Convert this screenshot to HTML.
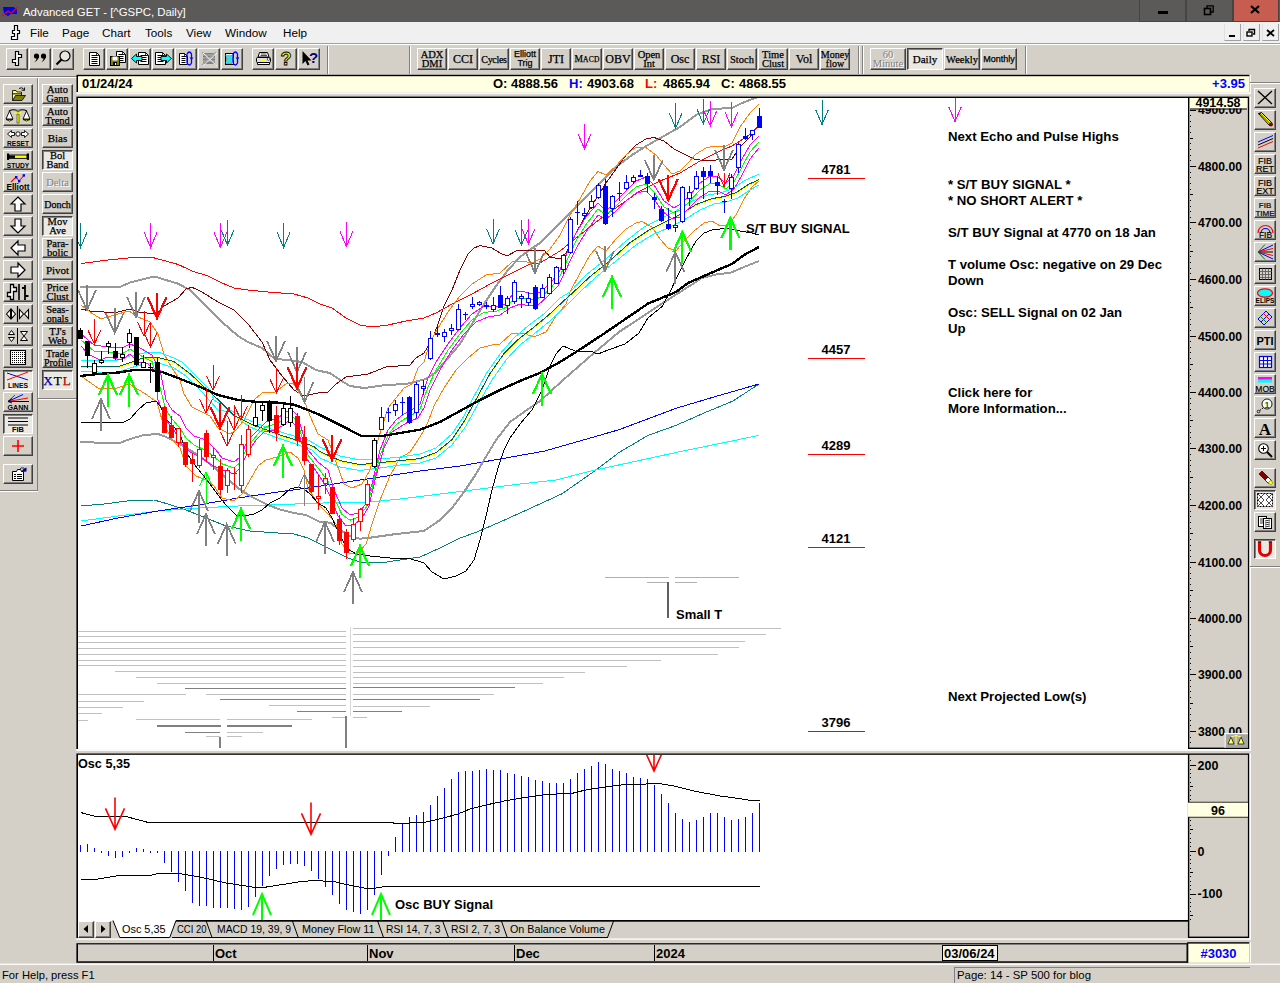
<!DOCTYPE html><html><head><meta charset="utf-8"><title>Advanced GET</title><style>
*{box-sizing:border-box;margin:0;padding:0}
html,body{width:1280px;height:983px;overflow:hidden;background:#d4d0c8;font-family:"Liberation Sans",sans-serif;}
.a{position:absolute}
.btn{position:absolute;background:#d4d0c8;border-top:1px solid #fff;border-left:1px solid #fff;border-right:1px solid #404040;border-bottom:1px solid #404040;box-shadow:inset -1px -1px 0 #808080;overflow:hidden}
.btn.dn{border-top:1px solid #404040;border-left:1px solid #404040;border-right:1px solid #fff;border-bottom:1px solid #fff;box-shadow:inset 1px 1px 0 #808080;background:#ebe9e4}
.st{font-family:"Liberation Serif",serif;font-size:10.5px;line-height:9px;text-align:center;color:#000;white-space:nowrap;display:flex;align-items:center;justify-content:center;-webkit-text-stroke:0.25px #000}
.lbl{position:absolute;font-weight:bold;font-size:13px;color:#000;white-space:nowrap;line-height:16px}
.menu{position:absolute;top:25px;font-size:11.7px;line-height:16px;color:#000}
svg{position:absolute;overflow:visible}
</style></head><body><div class="a" style="left:0;top:0;width:1280px;height:22px;background:#5c5a58"></div>
<svg style="left:2px;top:6px" width="18" height="11" viewBox="0 0 18 11"><path d="M1 1 L12 1 L15 4 L15 8 L9 8 L6 10 L2 8 Z" fill="#0000e0"/><path d="M0 10 L6 5 L9 7 L16 1" stroke="#f00" stroke-width="1.2" fill="none"/></svg>
<div class="a" style="left:23px;top:4px;font-size:11.4px;line-height:16px;color:#fff;white-space:nowrap">Advanced GET - [^GSPC, Daily]</div>
<div class="a" style="left:1139px;top:0;width:47px;height:22px;background:#5c5a58;border:1px solid #464444;border-top:none"></div>
<div class="a" style="left:1186px;top:0;width:47px;height:22px;background:#5c5a58;border:1px solid #464444;border-top:none"></div>
<div class="a" style="left:1233px;top:0;width:46px;height:22px;background:#c75c50;border:1px solid #464444;border-top:none"></div>
<div class="a" style="left:1158px;top:11px;width:10px;height:3px;background:#000"></div>
<svg style="left:1203px;top:4px" width="12" height="12"><rect x="1.5" y="4.5" width="6" height="6" fill="none" stroke="#000" stroke-width="1.6"/><path d="M4 4 V1.8 H10.2 V8 H8" fill="none" stroke="#000" stroke-width="1.3"/></svg>
<svg style="left:1250px;top:5px" width="10" height="10"><path d="M1 1 L9 8 M9 1 L1 8" stroke="#000" stroke-width="2.2" fill="none"/></svg>
<div class="a" style="left:0;top:22px;width:1280px;height:21px;background:#f0f0f0"></div>
<div class="a" style="left:0;top:43px;width:1280px;height:1px;background:#a0a0a0"></div>
<svg style="left:9px;top:24px" width="12" height="18"><path d="M5.5 1.5 H8.5 V6.5 H10.5 V9.5 H8.5 V15.5 H2.5 V12.5 H5.5 V9.5 H3.5 V6.5 H5.5 Z" fill="#fff" stroke="#000" stroke-width="1.2"/></svg>
<div class="menu" style="left:30px">File</div>
<div class="menu" style="left:62px">Page</div>
<div class="menu" style="left:102px">Chart</div>
<div class="menu" style="left:145px">Tools</div>
<div class="menu" style="left:186px">View</div>
<div class="menu" style="left:225px">Window</div>
<div class="menu" style="left:283px">Help</div>
<div class="a" style="left:1224px;top:24px;width:17px;height:17px;background:#f0f0f0;border-right:1px solid #a0a0a0;border-bottom:1px solid #a0a0a0;border-left:1px solid #e0e0e0"></div>
<div class="a" style="left:1243px;top:24px;width:17px;height:17px;background:#f0f0f0;border-right:1px solid #a0a0a0;border-bottom:1px solid #a0a0a0;border-left:1px solid #e0e0e0"></div>
<div class="a" style="left:1262px;top:24px;width:17px;height:17px;background:#f0f0f0;border-right:1px solid #a0a0a0;border-bottom:1px solid #a0a0a0;border-left:1px solid #e0e0e0"></div>
<div class="a" style="left:1229px;top:35px;width:6px;height:2px;background:#000"></div>
<svg style="left:1246px;top:28px" width="10" height="10"><rect x="1" y="4" width="5" height="4" fill="none" stroke="#000" stroke-width="1.4"/><path d="M3 3 V1.5 H8.5 V6 H7" fill="none" stroke="#000" stroke-width="1.4"/></svg>
<svg style="left:1266px;top:29px" width="9" height="8"><path d="M1 1 L8 7 M8 1 L1 7" stroke="#000" stroke-width="1.8" fill="none"/></svg>
<div class="a" style="left:0;top:44px;width:1280px;height:1px;background:#fff"></div>
<div class="btn " style="left:6px;top:48px;width:22px;height:22px"><svg style="left:0;top:0" width="20" height="19" viewBox="0 0 20 19" ><path d="M8.5 2.5 H11.5 V5.5 H14.5 V8.5 H11.5 V16.5 H8.5 V13.5 H5.5 V10.5 H8.5 Z" fill="#fff" stroke="#000" stroke-width="1.2"/></svg></div>
<div class="btn " style="left:29px;top:48px;width:22px;height:22px"><svg style="left:0;top:0" width="20" height="19" viewBox="0 0 20 19" ><circle cx="6.5" cy="7" r="2.6" fill="#000"/><path d="M8.9 6 Q9.5 11 4.0 13.5 Q7.5 10.5 6.0 8 Z" fill="#000"/><circle cx="13.5" cy="7" r="2.6" fill="#000"/><path d="M15.9 6 Q16.5 11 11.0 13.5 Q14.5 10.5 13.0 8 Z" fill="#000"/></svg></div>
<div class="btn " style="left:52px;top:48px;width:22px;height:22px"><svg style="left:0;top:0" width="20" height="19" viewBox="0 0 20 19" ><circle cx="12" cy="7" r="5" fill="#e8e6e0" stroke="#000" stroke-width="1.2"/><path d="M8.5 10.5 L3.5 15.5" stroke="#000" stroke-width="2.2"/></svg></div>
<div class="btn " style="left:83px;top:48px;width:22px;height:22px"><svg style="left:0;top:0" width="20" height="19" viewBox="0 0 20 19" ><path d="M5.5 3.5 H12.5 L15.5 6.5 V16.5 H5.5 Z" fill="#fff" stroke="#000" stroke-width="1"/><path d="M12.5 3.5 V6.5 H15.5" fill="none" stroke="#000" stroke-width="0.8"/><path d="M7.5 6.5 H13.5" stroke="#000" stroke-width="1"/><path d="M7.5 8.5 H13.5" stroke="#000" stroke-width="1"/><path d="M7.5 10.5 H13.5" stroke="#000" stroke-width="1"/><path d="M7.5 12.5 H13.5" stroke="#000" stroke-width="1"/><path d="M7.5 14.5 H13.5" stroke="#000" stroke-width="1"/></svg></div>
<div class="btn " style="left:106px;top:48px;width:22px;height:22px"><svg style="left:0;top:0" width="20" height="19" viewBox="0 0 20 19" ><path d="M9.5 2.5 H15.5 L18.5 5.5 V13.5 H9.5 Z" fill="#fff" stroke="#000" stroke-width="1"/><path d="M15.5 2.5 V5.5 H18.5" fill="none" stroke="#000" stroke-width="0.8"/><path d="M11.5 5.5 H16.5" stroke="#000" stroke-width="1"/><path d="M11.5 7.5 H16.5" stroke="#000" stroke-width="1"/><path d="M11.5 9.5 H16.5" stroke="#000" stroke-width="1"/><path d="M11.5 11.5 H16.5" stroke="#000" stroke-width="1"/><rect x="3.5" y="7.5" width="9" height="9" fill="#808000" stroke="#000"/><rect x="5.5" y="7.5" width="5" height="4" fill="#fff"/><rect x="6" y="13" width="4" height="3.5" fill="#000"/><rect x="8" y="14" width="1.2" height="2" fill="#fff"/></svg></div>
<div class="btn " style="left:129px;top:48px;width:22px;height:22px"><svg style="left:0;top:0" width="20" height="19" viewBox="0 0 20 19" ><path d="M8.5 3.5 H15.5 L18.5 6.5 V15.5 H8.5 Z" fill="#fff" stroke="#000" stroke-width="1"/><path d="M15.5 3.5 V6.5 H18.5" fill="none" stroke="#000" stroke-width="0.8"/><path d="M10.5 6.5 H16.5" stroke="#000" stroke-width="1"/><path d="M10.5 8.5 H16.5" stroke="#000" stroke-width="1"/><path d="M10.5 10.5 H16.5" stroke="#000" stroke-width="1"/><path d="M10.5 12.5 H16.5" stroke="#000" stroke-width="1"/><path d="M1.5 9.5 L6.5 5 V7.5 H12 V11.5 H6.5 V14 Z" fill="#0ff" stroke="#000" stroke-width="0.9"/></svg></div>
<div class="btn " style="left:152px;top:48px;width:22px;height:22px"><svg style="left:0;top:0" width="20" height="19" viewBox="0 0 20 19" ><path d="M2.5 3.5 H9.5 L12.5 6.5 V15.5 H2.5 Z" fill="#fff" stroke="#000" stroke-width="1"/><path d="M9.5 3.5 V6.5 H12.5" fill="none" stroke="#000" stroke-width="0.8"/><path d="M4.5 6.5 H10.5" stroke="#000" stroke-width="1"/><path d="M4.5 8.5 H10.5" stroke="#000" stroke-width="1"/><path d="M4.5 10.5 H10.5" stroke="#000" stroke-width="1"/><path d="M4.5 12.5 H10.5" stroke="#000" stroke-width="1"/><path d="M18.5 9.5 L13.5 5 V7.5 H8 V11.5 H13.5 V14 Z" fill="#0ff" stroke="#000" stroke-width="0.9"/></svg></div>
<div class="btn " style="left:175px;top:48px;width:22px;height:22px"><svg style="left:0;top:0" width="20" height="19" viewBox="0 0 20 19" ><path d="M3.5 4.5 H8.5 L11.5 7.5 V15.5 H3.5 Z" fill="#fff" stroke="#000" stroke-width="1"/><path d="M8.5 4.5 V7.5 H11.5" fill="none" stroke="#000" stroke-width="0.8"/><path d="M5.5 7.5 H9.5" stroke="#000" stroke-width="1"/><path d="M5.5 9.5 H9.5" stroke="#000" stroke-width="1"/><path d="M5.5 11.5 H9.5" stroke="#000" stroke-width="1"/><path d="M5.5 13.5 H9.5" stroke="#000" stroke-width="1"/><path d="M11 5 Q13.5 1 15.5 5 V9 M11 14 Q13.5 18 15.5 14 V10 M11 5 V14" fill="none" stroke="#00f" stroke-width="1.3"/><path d="M13.5 8.5 H17.5 L15.5 11 Z" fill="#00f"/></svg></div>
<div class="btn " style="left:198px;top:48px;width:22px;height:22px"><svg style="left:0;top:0" width="20" height="19" viewBox="0 0 20 19" ><rect x="4" y="4" width="12" height="11" fill="#808080"/><path d="M3 3 L17 16 M17 3 L3 16 M4 6 H16 M4 9 H16 M4 12 H16" stroke="#a8a8a8" stroke-width="1.3"/><path d="M4 4 L18 17 M18 4 L4 17" stroke="#fff" stroke-width="0.8"/></svg></div>
<div class="btn " style="left:221px;top:48px;width:22px;height:22px"><svg style="left:0;top:0" width="20" height="19" viewBox="0 0 20 19" ><rect x="3.5" y="4.5" width="8" height="11" fill="#fff" stroke="#000"/><path d="M5 6 V15 M7 6 V15 M9 6 V15" stroke="#000" stroke-width="0.8"/><path d="M4 6 L8 10 L4 14 M7 6 L11 10 L7 14" fill="none" stroke="#0ff" stroke-width="1.6"/><path d="M11 5 Q13.5 1 15.5 5 V9 M11 14 Q13.5 18 15.5 14 V10 M11 5 V14" fill="none" stroke="#00f" stroke-width="1.3"/><path d="M13.5 8.5 H17.5 L15.5 11 Z" fill="#00f"/></svg></div>
<div class="btn " style="left:252px;top:48px;width:22px;height:22px"><svg style="left:0;top:0" width="20" height="19" viewBox="0 0 20 19" ><path d="M6.5 3.5 H14.5 L16 8 H5 Z" fill="#fff" stroke="#000"/><path d="M8 5 H13.5 M7.5 6.5 H14" stroke="#000" stroke-width="0.7"/><rect x="3.5" y="8.5" width="14" height="5" rx="1" fill="#e0e0e0" stroke="#000"/><path d="M4.5 13.5 H16.5 V15.5 H4.5 Z" fill="#fff" stroke="#000"/><rect x="9" y="11" width="3" height="1" fill="#ff0"/><circle cx="15.5" cy="10" r="1.3" fill="#fff" stroke="#000" stroke-width="0.6"/></svg></div>
<div class="btn " style="left:275px;top:48px;width:22px;height:22px"><svg style="left:0;top:0" width="20" height="19" viewBox="0 0 20 19" ><text x="10" y="16" font-family="Liberation Sans, sans-serif" font-weight="bold" font-size="18" text-anchor="middle" fill="#ff0" stroke="#000" stroke-width="0.9">?</text></svg></div>
<div class="btn " style="left:298px;top:48px;width:22px;height:22px"><svg style="left:0;top:0" width="20" height="19" viewBox="0 0 20 19" ><path d="M3.5 2 V15 L6.5 12 L8.5 16.5 L10.5 15.5 L8.5 11.5 H12.5 Z" fill="#000"/><text x="14.5" y="14" font-family="Liberation Sans, sans-serif" font-weight="bold" font-size="15" text-anchor="middle" fill="#000080">?</text></svg></div>
<div class="a" style="left:327px;top:46px;width:1px;height:28px;background:#808080"></div>
<div class="a" style="left:328px;top:46px;width:1px;height:28px;background:#fff"></div>
<div class="a" style="left:409px;top:46px;width:1px;height:28px;background:#808080"></div>
<div class="a" style="left:410px;top:46px;width:1px;height:28px;background:#fff"></div>
<div class="btn st " style="left:417px;top:48px;width:30px;height:22px;">ADX<br>DMI</div>
<div class="btn st " style="left:448px;top:48px;width:30px;height:22px;font-size:12px;">CCI</div>
<div class="btn st " style="left:479px;top:48px;width:30px;height:22px;font-size:10px;letter-spacing:-0.3px;">Cycles</div>
<div class="btn st " style="left:510px;top:48px;width:30px;height:22px;font-family:'Liberation Sans',sans-serif;font-size:9px;line-height:9px;">Elliott<br>Trig</div>
<div class="btn st " style="left:541px;top:48px;width:30px;height:22px;font-size:12px;">JTI</div>
<div class="btn st " style="left:572px;top:48px;width:30px;height:22px;font-size:9.5px;letter-spacing:0.2px;">M<span style="font-size:7.5px">ACD</span></div>
<div class="btn st " style="left:603px;top:48px;width:30px;height:22px;font-size:12px;">OBV</div>
<div class="btn st " style="left:634px;top:48px;width:30px;height:22px;">Open<br>Int</div>
<div class="btn st " style="left:665px;top:48px;width:30px;height:22px;font-size:12px;">Osc</div>
<div class="btn st " style="left:696px;top:48px;width:30px;height:22px;font-size:12px;">RSI</div>
<div class="btn st " style="left:727px;top:48px;width:30px;height:22px;">Stoch</div>
<div class="btn st " style="left:758px;top:48px;width:30px;height:22px;">Time<br>Clust</div>
<div class="btn st " style="left:789px;top:48px;width:30px;height:22px;font-size:12px;">Vol</div>
<div class="btn st " style="left:820px;top:48px;width:30px;height:22px;font-size:10px;">Money<br>flow</div>
<div class="a" style="left:858px;top:46px;width:1px;height:28px;background:#808080"></div>
<div class="a" style="left:859px;top:46px;width:1px;height:28px;background:#fff"></div>
<div class="a" style="left:862px;top:46px;width:1px;height:28px;background:#808080"></div>
<div class="a" style="left:863px;top:46px;width:1px;height:28px;background:#fff"></div>
<div class="btn st " style="left:870px;top:48px;width:36px;height:22px;color:#808080;text-shadow:1px 1px 0 #fff;-webkit-text-stroke:0;">60<br>Minute</div>
<div class="btn st dn" style="left:907px;top:48px;width:36px;height:22px;font-size:11px;">Daily</div>
<div class="btn st " style="left:944px;top:48px;width:36px;height:22px;font-size:10.5px;">Weekly</div>
<div class="btn st " style="left:981px;top:48px;width:36px;height:22px;font-family:'Liberation Sans',sans-serif;font-size:9px;">Monthly</div>
<div class="a" style="left:1025px;top:46px;width:1px;height:28px;background:#808080"></div>
<div class="a" style="left:1026px;top:46px;width:1px;height:28px;background:#fff"></div>
<div class="a" style="left:0;top:76px;width:77px;height:1px;background:#808080"></div>
<div class="a" style="left:0;top:77px;width:77px;height:1px;background:#fff"></div>
<div class="a" style="left:37px;top:78px;width:1px;height:413px;background:#808080"></div>
<div class="a" style="left:38px;top:78px;width:1px;height:321px;background:#fff"></div>
<div class="a" style="left:0px;top:490px;width:38px;height:1px;background:#808080"></div>
<div class="a" style="left:0px;top:491px;width:38px;height:1px;background:#fff"></div>
<div class="a" style="left:38px;top:398px;width:39px;height:1px;background:#808080"></div>
<div class="a" style="left:38px;top:399px;width:39px;height:1px;background:#fff"></div>
<div class="btn " style="left:3px;top:84px;width:30px;height:20px"><svg style="left:0;top:0" width="28" height="18" viewBox="0 0 28 18" ><path d="M8.5 5.5 H12 L13 7 H17.5 V9 H8.5 Z" fill="#ff6" stroke="#000" stroke-width="0.8"/><path d="M8.5 15.5 V9 H17.5 V11" fill="#ffffa0" stroke="#000" stroke-width="0.8"/><path d="M8.5 15.5 L11.5 10.5 H21.5 L18 15.5 Z" fill="#808000" stroke="#000" stroke-width="0.8"/><path d="M15 3.5 Q18 1.5 20 4.5 M20.5 5.5 L20.5 2.5 M20.5 5.5 L17.5 5" fill="none" stroke="#000" stroke-width="0.9"/></svg></div>
<div class="btn " style="left:3px;top:106px;width:30px;height:20px"><svg style="left:0;top:0" width="28" height="18" viewBox="0 0 28 18" ><path d="M14 3 V16 M5 4 Q9.5 1.5 14 4 Q18.5 1.5 23 4" fill="none" stroke="#000" stroke-width="1.1"/><rect x="13" y="7" width="2" height="9" fill="#ff0" stroke="#000" stroke-width="0.5"/><path d="M5.5 4 L2 12 H9 Z M22.5 4 L19 12 H26 Z" fill="#fff" stroke="#000" stroke-width="0.9"/><path d="M2 12.5 Q5.5 15.5 9 12.5 Z M19 12.5 Q22.5 15.5 26 12.5 Z" fill="#ff0" stroke="#000" stroke-width="0.8"/><path d="M11.5 4.5 L14 2 L16.5 4.5 Z" fill="#808080"/><path d="M10.5 6 H17.5" stroke="#ff0" stroke-width="1.5"/></svg></div>
<div class="btn " style="left:3px;top:128px;width:30px;height:20px"><svg style="left:0;top:0" width="28" height="18" viewBox="0 0 28 18" ><path d="M3.5 5 L7.5 1.5 V3.5 H10.5 V6.5 H7.5 V8.5 Z M24.5 5 L20.5 1.5 V3.5 H17.5 V6.5 H20.5 V8.5 Z" fill="#fff" stroke="#000" stroke-width="0.9"/><circle cx="14" cy="5" r="2.2" fill="#fff" stroke="#000" stroke-width="0.9"/><text x="14" y="16.5" font-family="Liberation Sans, sans-serif" font-weight="bold" font-size="7.5" text-anchor="middle" fill="#000" letter-spacing="0" textLength="22" lengthAdjust="spacingAndGlyphs">RESET</text></svg></div>
<div class="btn " style="left:3px;top:150px;width:30px;height:20px"><svg style="left:0;top:0" width="28" height="18" viewBox="0 0 28 18" ><rect x="5" y="4" width="18" height="3.4" fill="#ff0" stroke="#000" stroke-width="0.9"/><rect x="3" y="2.5" width="2.2" height="6.4" fill="#000"/><rect x="22.8" y="2.5" width="2.2" height="6.4" fill="#000"/><rect x="5" y="4.5" width="6" height="2.4" fill="#000"/><text x="14" y="16.5" font-family="Liberation Sans, sans-serif" font-weight="bold" font-size="7.5" text-anchor="middle" fill="#000" letter-spacing="0" textLength="22.5" lengthAdjust="spacingAndGlyphs">STUDY</text></svg></div>
<div class="btn " style="left:3px;top:172px;width:30px;height:20px"><svg style="left:0;top:0" width="28" height="18" viewBox="0 0 28 18" ><path d="M7 9 L12 4 L15 8 L20 2.5" fill="none" stroke="#f00" stroke-width="1.1"/><rect x="11" y="3" width="2.4" height="2.4" fill="#00f"/><rect x="14" y="7" width="2.4" height="2.4" fill="#00f"/><rect x="18.6" y="1.2" width="2.4" height="2.4" fill="#00f"/><text x="14" y="16.5" font-family="Liberation Sans, sans-serif" font-weight="bold" font-size="8.5" text-anchor="middle" fill="#000" letter-spacing="0" textLength="23" lengthAdjust="spacingAndGlyphs">Elliott</text></svg></div>
<div class="btn " style="left:3px;top:194px;width:30px;height:20px"><svg style="left:0;top:0" width="28" height="18" viewBox="0 0 28 18" ><g transform="rotate(0 14 9)"><path d="M14 2 L21 9 H17 V16 H11 V9 H7 Z" fill="#fff" stroke="#000" stroke-width="1.2"/></g></svg></div>
<div class="btn " style="left:3px;top:216px;width:30px;height:20px"><svg style="left:0;top:0" width="28" height="18" viewBox="0 0 28 18" ><g transform="rotate(180 14 9)"><path d="M14 2 L21 9 H17 V16 H11 V9 H7 Z" fill="#fff" stroke="#000" stroke-width="1.2"/></g></svg></div>
<div class="btn " style="left:3px;top:238px;width:30px;height:20px"><svg style="left:0;top:0" width="28" height="18" viewBox="0 0 28 18" ><g transform="rotate(270 14 9)"><path d="M14 2 L21 9 H17 V16 H11 V9 H7 Z" fill="#fff" stroke="#000" stroke-width="1.2"/></g></svg></div>
<div class="btn " style="left:3px;top:260px;width:30px;height:20px"><svg style="left:0;top:0" width="28" height="18" viewBox="0 0 28 18" ><g transform="rotate(90 14 9)"><path d="M14 2 L21 9 H17 V16 H11 V9 H7 Z" fill="#fff" stroke="#000" stroke-width="1.2"/></g></svg></div>
<div class="btn " style="left:3px;top:282px;width:30px;height:20px"><svg style="left:0;top:0" width="28" height="18" viewBox="0 0 28 18" ><path d="M6.5 1.5 H9.5 V4.5 H12.5 V8.5 H9.5 V16.5 H6.5 V13.5 H3.5 V9.5 H6.5 Z" fill="#fff" stroke="#000" stroke-width="1.3"/><path d="M15 1 V17" stroke="#000" stroke-width="1.6"/><path d="M21 2 V17 M18 5 H21 M21 13 H24.5" stroke="#000" stroke-width="1.8" fill="none"/></svg></div>
<div class="btn " style="left:3px;top:304px;width:30px;height:20px"><svg style="left:0;top:0" width="28" height="18" viewBox="0 0 28 18" ><path d="M13.5 1 V17" stroke="#000" stroke-width="1.2"/><path d="M2.5 9 L6.5 4.5 V13.5 Z M11.5 9 L7.5 4.5 V13.5 Z M15.5 4.5 L19.5 9 L15.5 13.5 Z M24.5 4.5 L20.5 9 L24.5 13.5 Z" fill="#fff" stroke="#000" stroke-width="1.1"/></svg></div>
<div class="btn " style="left:3px;top:326px;width:30px;height:20px"><svg style="left:0;top:0" width="28" height="18" viewBox="0 0 28 18" ><path d="M13.5 1 V17" stroke="#000" stroke-width="1"/><path d="M4.5 7.5 L7.5 3.5 L10.5 7.5 Z M4.5 10.5 L7.5 14.5 L10.5 10.5 Z" fill="#fff" stroke="#000" stroke-width="1"/><path d="M16.5 4.5 H23.5 L16.5 13.5 H23.5 Z" fill="#fff" stroke="#000" stroke-width="1"/></svg></div>
<div class="btn " style="left:3px;top:348px;width:30px;height:20px"><svg style="left:0;top:0" width="28" height="18" viewBox="0 0 28 18" ><rect x="6.5" y="1.5" width="15" height="14" fill="#fff" stroke="#000" stroke-width="1.1"/><rect x="8" y="3" width="1" height="1" fill="#000"/><rect x="8" y="5" width="1" height="1" fill="#000"/><rect x="8" y="7" width="1" height="1" fill="#000"/><rect x="8" y="9" width="1" height="1" fill="#000"/><rect x="8" y="11" width="1" height="1" fill="#000"/><rect x="8" y="13" width="1" height="1" fill="#000"/><rect x="10" y="3" width="1" height="1" fill="#000"/><rect x="10" y="5" width="1" height="1" fill="#000"/><rect x="10" y="7" width="1" height="1" fill="#000"/><rect x="10" y="9" width="1" height="1" fill="#000"/><rect x="10" y="11" width="1" height="1" fill="#000"/><rect x="10" y="13" width="1" height="1" fill="#000"/><rect x="12" y="3" width="1" height="1" fill="#000"/><rect x="12" y="5" width="1" height="1" fill="#000"/><rect x="12" y="7" width="1" height="1" fill="#000"/><rect x="12" y="9" width="1" height="1" fill="#000"/><rect x="12" y="11" width="1" height="1" fill="#000"/><rect x="12" y="13" width="1" height="1" fill="#000"/><rect x="14" y="3" width="1" height="1" fill="#000"/><rect x="14" y="5" width="1" height="1" fill="#000"/><rect x="14" y="7" width="1" height="1" fill="#000"/><rect x="14" y="9" width="1" height="1" fill="#000"/><rect x="14" y="11" width="1" height="1" fill="#000"/><rect x="14" y="13" width="1" height="1" fill="#000"/><rect x="16" y="3" width="1" height="1" fill="#000"/><rect x="16" y="5" width="1" height="1" fill="#000"/><rect x="16" y="7" width="1" height="1" fill="#000"/><rect x="16" y="9" width="1" height="1" fill="#000"/><rect x="16" y="11" width="1" height="1" fill="#000"/><rect x="16" y="13" width="1" height="1" fill="#000"/><rect x="18" y="3" width="1" height="1" fill="#000"/><rect x="18" y="5" width="1" height="1" fill="#000"/><rect x="18" y="7" width="1" height="1" fill="#000"/><rect x="18" y="9" width="1" height="1" fill="#000"/><rect x="18" y="11" width="1" height="1" fill="#000"/><rect x="18" y="13" width="1" height="1" fill="#000"/><rect x="20" y="3" width="1" height="1" fill="#000"/><rect x="20" y="5" width="1" height="1" fill="#000"/><rect x="20" y="7" width="1" height="1" fill="#000"/><rect x="20" y="9" width="1" height="1" fill="#000"/><rect x="20" y="11" width="1" height="1" fill="#000"/><rect x="20" y="13" width="1" height="1" fill="#000"/></svg></div>
<div class="btn dn" style="left:3px;top:370px;width:30px;height:20px"><svg style="left:0;top:0" width="28" height="18" viewBox="0 0 28 18" ><path d="M3 2 L24 9" stroke="#00f" stroke-width="1"/><path d="M3 9 L24 1" stroke="#f00" stroke-width="1"/><text x="14" y="16.5" font-family="Liberation Sans, sans-serif" font-weight="bold" font-size="7" text-anchor="middle" fill="#000" letter-spacing="0" textLength="20" lengthAdjust="spacingAndGlyphs">LINES</text></svg></div>
<div class="btn " style="left:3px;top:392px;width:30px;height:20px"><svg style="left:0;top:0" width="28" height="18" viewBox="0 0 28 18" ><path d="M4 8.5 H25" stroke="#000"/><path d="M4 8.5 L24 5" stroke="#f00"/><path d="M4 8.5 L19 1.5" stroke="#00f"/><path d="M4 8.5 L11 2" stroke="#008000"/><path d="M4 8.5 L8 5.5 M4 8.5 L8 10" stroke="#000" stroke-width="0.9"/><text x="14" y="17" font-family="Liberation Sans, sans-serif" font-weight="bold" font-size="7.5" text-anchor="middle" fill="#000" letter-spacing="0" textLength="21" lengthAdjust="spacingAndGlyphs">GANN</text></svg></div>
<div class="btn dn" style="left:3px;top:414px;width:30px;height:20px"><svg style="left:0;top:0" width="28" height="18" viewBox="0 0 28 18" ><path d="M4 3 H24 M4 6.5 H24 M4 10 H24" stroke="#000" stroke-width="1"/><text x="14" y="17" font-family="Liberation Sans, sans-serif" font-weight="bold" font-size="7.5" text-anchor="middle" fill="#000" letter-spacing="0" textLength="12" lengthAdjust="spacingAndGlyphs">FIB</text></svg></div>
<div class="btn " style="left:3px;top:436px;width:30px;height:20px"><svg style="left:0;top:0" width="28" height="18" viewBox="0 0 28 18" ><path d="M14 3 V15 M8 9 H20" stroke="#f00" stroke-width="1.6"/></svg></div>
<div class="btn " style="left:3px;top:464px;width:30px;height:20px"><svg style="left:0;top:0" width="28" height="18" viewBox="0 0 28 18" ><path d="M8.5 6.5 H12.5 L13.5 4.5 H16.5 L17.5 6.5 H19.5 V15.5 H8.5 Z" fill="#fff" stroke="#000" stroke-width="1"/><path d="M10 9.5 H12 M13 9.5 H18 M10 11.5 H12 M13 11.5 H18 M10 13.5 H12 M13 13.5 H18" stroke="#000" stroke-width="1"/><path d="M17 7 L20 3.5 L22.5 2.5 V6.5 Z" fill="#000080"/><path d="M15 5 Q17 2 20 3" fill="none" stroke="#000" stroke-width="0.8"/></svg></div>
<div class="btn st " style="left:42px;top:84px;width:31px;height:20px;">Auto<br>Gann</div>
<div class="btn st " style="left:42px;top:106px;width:31px;height:20px;">Auto<br>Trend</div>
<div class="btn st " style="left:42px;top:128px;width:31px;height:20px;font-size:11px;">Bias</div>
<div class="btn st dn" style="left:42px;top:150px;width:31px;height:20px;">Bol<br>Band</div>
<div class="btn st " style="left:42px;top:172px;width:31px;height:20px;font-size:10.5px;color:#808080;text-shadow:1px 1px 0 #fff;-webkit-text-stroke:0;">Delta</div>
<div class="btn st " style="left:42px;top:194px;width:31px;height:20px;font-size:10px;">Donch</div>
<div class="btn st dn" style="left:42px;top:216px;width:31px;height:20px;">Mov<br>Ave</div>
<div class="btn st " style="left:42px;top:238px;width:31px;height:20px;">Para-<br>bolic</div>
<div class="btn st " style="left:42px;top:260px;width:31px;height:20px;font-size:11px;">Pivot</div>
<div class="btn st " style="left:42px;top:282px;width:31px;height:20px;">Price<br>Clust</div>
<div class="btn st " style="left:42px;top:304px;width:31px;height:20px;">Seas-<br>onals</div>
<div class="btn st " style="left:42px;top:326px;width:31px;height:20px;">TJ's<br>Web</div>
<div class="btn st " style="left:42px;top:348px;width:31px;height:20px;font-size:10px;">Trade<br>Profile</div>
<div class="btn st dn" style="left:42px;top:370px;width:31px;height:20px;font-size:13px;letter-spacing:1px;"><span style="color:#00f">X</span>T<span style="color:#f00">L</span></div>
<svg style="left:0;top:0" width="1280" height="983" viewBox="0 0 1280 983">
<rect x="76.5" y="74.8" width="1173.00" height="17.40" fill="#000"/>
<rect x="78" y="76.2" width="1171.50" height="16.00" fill="#ffffe1"/>
<rect x="76.5" y="92.2" width="1174.50" height="2.00" fill="#fbfaf8"/>
<rect x="1249.7" y="74.8" width="1.30" height="19.40" fill="#fbfaf8"/>
<rect x="76.4" y="96.6" width="1172.70" height="652.40" fill="#000"/>
<rect x="78" y="98" width="1110.00" height="651.00" fill="#fff"/>
<rect x="1189.3" y="98" width="58.60" height="649.60" fill="#d4d0c8"/>
<rect x="76.4" y="749" width="1174.60" height="2.00" fill="#fbfaf8"/>
<rect x="1249.8" y="96.6" width="1.20" height="654.40" fill="#fbfaf8"/>
<rect x="76.4" y="753.5" width="1172.70" height="184.70" fill="#000"/>
<rect x="78" y="754.8" width="1109.90" height="166.20" fill="#fff"/>
<rect x="78" y="921.7" width="1109.90" height="16.50" fill="#d4d0c8"/>
<rect x="78" y="920.8" width="98.00" height="0.90" fill="#fff"/>
<rect x="1189.3" y="754.8" width="58.60" height="181.80" fill="#d4d0c8"/>
<rect x="76.4" y="938.2" width="1174.60" height="1.60" fill="#fbfaf8"/>
<rect x="1249.8" y="753.5" width="1.20" height="186.30" fill="#fbfaf8"/>
<rect x="76.4" y="943.2" width="1111.40" height="19.60" fill="#000"/>
<rect x="78" y="944.4" width="1108.50" height="16.90" fill="#d4d0c8"/>
<rect x="1187.2" y="942.2" width="62.20" height="20.70" fill="#000"/>
<rect x="1188.3" y="943.6" width="61.10" height="19.30" fill="#ffffe1"/>
<rect x="1249.6" y="942.2" width="1.40" height="21.30" fill="#fbfaf8"/>
<rect x="0" y="963.6" width="1280.00" height="1.40" fill="#fbfaf8"/>
</svg>
<div class="lbl" style="left:82px;top:76px;color:#000">01/24/24</div>
<div class="lbl" style="left:493px;top:76px;color:#000">O:</div>
<div class="lbl" style="left:511px;top:76px;color:#000">4888.56</div>
<div class="lbl" style="left:569px;top:76px;color:#00f">H:</div>
<div class="lbl" style="left:587px;top:76px;color:#000">4903.68</div>
<div class="lbl" style="left:645px;top:76px;color:#f00">L:</div>
<div class="lbl" style="left:663px;top:76px;color:#000">4865.94</div>
<div class="lbl" style="left:721px;top:76px;color:#000">C:</div>
<div class="lbl" style="left:739px;top:76px;color:#000">4868.55</div>
<div class="lbl" style="right:35px;top:76px;color:#00f">+3.95</div>
<div class="lbl" style="left:1190px;width:57px;text-align:center;top:946px;color:#00f">#3030</div>
<div class="a" style="left:213px;top:945px;width:1px;height:16px;background:#000"></div>
<div class="lbl" style="left:215px;top:946px">Oct</div>
<div class="a" style="left:367px;top:945px;width:1px;height:16px;background:#000"></div>
<div class="lbl" style="left:369px;top:946px">Nov</div>
<div class="a" style="left:514px;top:945px;width:1px;height:16px;background:#000"></div>
<div class="lbl" style="left:516px;top:946px">Dec</div>
<div class="a" style="left:654px;top:945px;width:1px;height:16px;background:#000"></div>
<div class="lbl" style="left:656px;top:946px">2024</div>
<div class="a" style="left:942px;top:945px;width:56px;height:16px;background:#f4f4ec;border:1px solid #000"></div>
<div class="lbl" style="left:944px;top:946px">03/06/24</div>
<div class="a" style="left:2px;top:967px;font-size:11.2px;line-height:16px;color:#000">For Help, press F1</div>
<div class="a" style="left:954px;top:967px;width:296px;height:16px;border-left:1px solid #808080;border-top:1px solid #808080;font-size:11.4px;line-height:15px;padding-left:2px;color:#000">Page: 14 - SP 500 for blog</div>
<div class="a" style="left:1250px;top:82px;width:30px;height:1px;background:#808080"></div>
<div class="a" style="left:1250px;top:83px;width:30px;height:1px;background:#fff"></div>
<div class="btn " style="left:1254px;top:88px;width:22px;height:20px"><svg style="left:0;top:0" width="20" height="18" viewBox="0 0 20 18" ><path d="M3 2 L17 15 M17 2 L3 15" stroke="#000" stroke-width="1.3"/></svg></div>
<div class="btn " style="left:1254px;top:110px;width:22px;height:20px"><svg style="left:0;top:0" width="20" height="18" viewBox="0 0 20 18" ><path d="M4 3 L6.5 1.5 L17 12 L14.5 14.5 Z" fill="#ff0" stroke="#000" stroke-width="1"/><path d="M3 2 L6.5 1.5 L4 4 Z" fill="#000"/><circle cx="16" cy="13.5" r="2" fill="#800000"/><path d="M5.5 3 L15.5 13" stroke="#000" stroke-width="0.7"/></svg></div>
<div class="btn " style="left:1254px;top:132px;width:22px;height:20px"><svg style="left:0;top:0" width="20" height="18" viewBox="0 0 20 18" ><path d="M3 9 L18 2.5" stroke="#00f"/><path d="M3 12 L18 5.5" stroke="#000"/><path d="M3 15 L18 8.5" stroke="#f00"/></svg></div>
<div class="btn " style="left:1254px;top:154px;width:22px;height:20px"><svg style="left:0;top:0" width="20" height="18" viewBox="0 0 20 18" ><text x="10" y="9.3" font-family="Liberation Sans, sans-serif" font-size="9" text-anchor="middle" fill="#000" stroke="#000" stroke-width="0.2">FIB</text><text x="10" y="17" font-family="Liberation Sans, sans-serif" font-size="9" text-anchor="middle" fill="#000" stroke="#000" stroke-width="0.2">RET</text></svg></div>
<div class="btn " style="left:1254px;top:176px;width:22px;height:20px"><svg style="left:0;top:0" width="20" height="18" viewBox="0 0 20 18" ><text x="10" y="9.3" font-family="Liberation Sans, sans-serif" font-size="9" text-anchor="middle" fill="#000" stroke="#000" stroke-width="0.2">FIB</text><text x="10" y="17" font-family="Liberation Sans, sans-serif" font-size="9" text-anchor="middle" fill="#000" stroke="#000" stroke-width="0.2">EXT</text></svg></div>
<div class="btn " style="left:1254px;top:198px;width:22px;height:20px"><svg style="left:0;top:0" width="20" height="18" viewBox="0 0 20 18" ><text x="10" y="9.3" font-family="Liberation Sans, sans-serif" font-size="8" text-anchor="middle" fill="#000" stroke="#000" stroke-width="0.2">FIB</text><text x="10" y="17" font-family="Liberation Sans, sans-serif" font-size="8" text-anchor="middle" fill="#000" stroke="#000" stroke-width="0.2">TIME</text></svg></div>
<div class="btn " style="left:1254px;top:220px;width:22px;height:20px"><svg style="left:0;top:0" width="20" height="18" viewBox="0 0 20 18" ><path d="M3 12 A7.5 7.5 0 0 1 18 12" fill="none" stroke="#f00" stroke-width="1.2"/><path d="M6 12 A4.5 4.5 0 0 1 15 12" fill="none" stroke="#00f" stroke-width="1.2"/><text x="10.5" y="16.8" font-family="Liberation Sans, sans-serif" font-size="8.5" text-anchor="middle" fill="#000" stroke="#000" stroke-width="0.2">FIB</text></svg></div>
<div class="btn " style="left:1254px;top:242px;width:22px;height:20px"><svg style="left:0;top:0" width="20" height="18" viewBox="0 0 20 18" ><path d="M3 9 H18" stroke="#000"/><path d="M3 9 L18 2" stroke="#00f"/><path d="M3 9 L18 5.5" stroke="#f00"/><path d="M3 9 L18 12.5" stroke="#f00"/><path d="M3 9 L18 16" stroke="#00f"/><path d="M3 9 L10 1.5 M3 9 L10 16.5" stroke="#008000"/></svg></div>
<div class="btn " style="left:1254px;top:264px;width:22px;height:20px"><svg style="left:0;top:0" width="20" height="18" viewBox="0 0 20 18" ><rect x="4.5" y="3.5" width="12" height="11" fill="none" stroke="#000"/><path d="M7.5 3.5 V14.5 M10.5 3.5 V14.5 M13.5 3.5 V14.5 M4.5 6.5 H16.5 M4.5 9.5 H16.5 M4.5 12.5 H16.5" stroke="#606060" stroke-width="0.9"/></svg></div>
<div class="btn " style="left:1254px;top:286px;width:22px;height:20px"><svg style="left:0;top:0" width="20" height="18" viewBox="0 0 20 18" ><ellipse cx="10" cy="6" rx="7.5" ry="4.2" fill="#0ff" stroke="#f00" stroke-width="1.2"/><text x="10" y="16" font-family="Liberation Sans, sans-serif" font-weight="bold" font-size="6.5" text-anchor="middle" fill="#000">ELIPS</text></svg></div>
<div class="btn " style="left:1254px;top:308px;width:22px;height:20px"><svg style="left:0;top:0" width="20" height="18" viewBox="0 0 20 18" ><path d="M3 10 L11 2 M6 13 L14 5 M9 16 L17 8" stroke="#00f" stroke-width="1"/><path d="M3 10 L9 16 M11 2 L17 8" stroke="#00f" stroke-width="1"/><path d="M8 4 L15 11" stroke="#f00" stroke-width="1"/><path d="M5 7 L12 14" stroke="#008000" stroke-width="1"/></svg></div>
<div class="btn " style="left:1254px;top:330px;width:22px;height:20px"><svg style="left:0;top:0" width="20" height="18" viewBox="0 0 20 18" ><text x="10" y="14" font-family="Liberation Sans, sans-serif" font-weight="bold" font-size="11" text-anchor="middle" fill="#000">PTI</text></svg></div>
<div class="btn " style="left:1254px;top:352px;width:22px;height:20px"><svg style="left:0;top:0" width="20" height="18" viewBox="0 0 20 18" ><rect x="4.5" y="3.5" width="12" height="11" fill="#fff" stroke="#00f" stroke-width="1.2"/><path d="M8.5 3.5 V14.5 M12.5 3.5 V14.5 M4.5 7.5 H16.5 M4.5 11 H16.5" stroke="#00f" stroke-width="1.1"/></svg></div>
<div class="btn " style="left:1254px;top:374px;width:22px;height:20px"><svg style="left:0;top:0" width="20" height="18" viewBox="0 0 20 18" ><rect x="3" y="2" width="14" height="2.6" fill="#f0f"/><rect x="3" y="5" width="14" height="2.6" fill="#0ff"/><text x="10" y="16.8" font-family="Liberation Sans, sans-serif" font-size="8.5" text-anchor="middle" fill="#000" stroke="#000" stroke-width="0.2">MOB</text></svg></div>
<div class="btn " style="left:1254px;top:396px;width:22px;height:20px"><svg style="left:0;top:0" width="20" height="18" viewBox="0 0 20 18" ><circle cx="12" cy="7" r="5" fill="#fff" stroke="#000" stroke-width="0.9"/><text x="12" y="10.5" font-family="Liberation Sans, sans-serif" font-weight="bold" font-size="9" text-anchor="middle" fill="#008000">1</text><path d="M8 11 L4 14" stroke="#000" stroke-dasharray="1.5 1"/><circle cx="3.5" cy="14.5" r="1.3" fill="none" stroke="#000" stroke-width="0.8"/></svg></div>
<div class="btn " style="left:1254px;top:418px;width:22px;height:20px"><svg style="left:0;top:0" width="20" height="18" viewBox="0 0 20 18" ><text x="10" y="15.5" font-family="Liberation Serif, serif" font-weight="bold" font-size="17" text-anchor="middle" fill="#000">A</text></svg></div>
<div class="btn " style="left:1254px;top:440px;width:22px;height:20px"><svg style="left:0;top:0" width="20" height="18" viewBox="0 0 20 18" ><circle cx="8.5" cy="7.5" r="4.8" fill="#fff" stroke="#000" stroke-width="1.1"/><path d="M6 7.5 H11 M8.5 5 V10" stroke="#000" stroke-width="1"/><path d="M12 11 L17 16" stroke="#000" stroke-width="2"/></svg></div>
<div class="btn " style="left:1254px;top:468px;width:22px;height:20px"><svg style="left:0;top:0" width="20" height="18" viewBox="0 0 20 18" ><path d="M4 5 L7 2 L13 8 L10 11 Z" fill="#800000" stroke="#800000"/><path d="M10 11 L13 8 L17 12 L14 15 Z" fill="#fff" stroke="#000" stroke-width="0.8"/><path d="M13 14 L16 11 L18 14 L16 16 Z" fill="#ff0" stroke="#808000" stroke-width="0.6"/></svg></div>
<div class="btn dn" style="left:1254px;top:490px;width:22px;height:20px"><svg style="left:0;top:0" width="20" height="18" viewBox="0 0 20 18" ><rect x="2.5" y="2.5" width="15" height="13" fill="#fff" stroke="#000" stroke-dasharray="2 1"/><path d="M3 3 L9 9 M9 3 L3 9 M11 3 L17 9 M17 3 L11 9 M3 9 L9 15 M9 9 L3 15 M11 9 L17 15 M17 9 L11 15" stroke="#000" stroke-width="0.7"/></svg></div>
<div class="btn " style="left:1254px;top:512px;width:22px;height:20px"><svg style="left:0;top:0" width="20" height="18" viewBox="0 0 20 18" ><rect x="3.5" y="3.5" width="8" height="10" fill="#fff" stroke="#000"/><rect x="8.5" y="5.5" width="8" height="10" fill="#fff" stroke="#000"/><path d="M5 6 H8 M5 8 H8 M5 10 H8 M10 8 L15 7 M10 10 L15 9 M10 12 L15 11 M10 14 L15 13" stroke="#000" stroke-width="0.8"/></svg></div>
<div class="btn dn" style="left:1254px;top:539px;width:22px;height:20px"><svg style="left:0;top:0" width="20" height="18" viewBox="0 0 20 18" ><path d="M4.5 2 V10 A5.5 5.5 0 0 0 15.5 10 V2" fill="none" stroke="#e00000" stroke-width="3.2"/><path d="M3 2 H6.2 M13.8 2 H17" stroke="#800000" stroke-width="1.5"/></svg></div>
<div class="a" style="left:1250px;top:566px;width:30px;height:1px;background:#808080"></div>
<div class="a" style="left:1250px;top:567px;width:30px;height:1px;background:#fff"></div>
<div class="btn " style="left:78px;top:921px;width:16px;height:17px"><svg style="left:0;top:0" width="14" height="15"><path d="M9 3 V11 L4.5 7 Z" fill="#000"/></svg></div>
<div class="btn " style="left:95px;top:921px;width:16px;height:17px"><svg style="left:0;top:0" width="14" height="15"><path d="M5 3 V11 L9.5 7 Z" fill="#000"/></svg></div>
<svg style="left:0;top:0" width="1280" height="983" viewBox="0 0 1280 983" shape-rendering="auto">
<defs><clipPath id="cm"><rect x="78" y="98" width="1110" height="651"/></clipPath><clipPath id="co"><rect x="78" y="755" width="1110" height="165"/></clipPath></defs>
<g clip-path="url(#cm)" shape-rendering="crispEdges">
<path d="M78 631.5 H346" stroke="#c0c0c0" stroke-width="1"/>
<path d="M78 636.5 H346" stroke="#c0c0c0" stroke-width="1"/>
<path d="M78 642.5 H346" stroke="#c0c0c0" stroke-width="1"/>
<path d="M78 648.5 H346" stroke="#c0c0c0" stroke-width="1"/>
<path d="M78 654.5 H346" stroke="#c0c0c0" stroke-width="1"/>
<path d="M78 660.5 H346" stroke="#c0c0c0" stroke-width="1"/>
<path d="M78 665.5 H346" stroke="#c0c0c0" stroke-width="1"/>
<path d="M115 671.5 H346" stroke="#c0c0c0" stroke-width="1"/>
<path d="M136 677.5 H346" stroke="#c0c0c0" stroke-width="1"/>
<path d="M157 683.5 H346" stroke="#c0c0c0" stroke-width="1"/>
<path d="M185 688.5 H346" stroke="#808080" stroke-width="1"/>
<path d="M78 694.5 H186" stroke="#c0c0c0" stroke-width="1"/>
<path d="M206 694.5 H346" stroke="#c0c0c0" stroke-width="1"/>
<path d="M220 699.5 H346" stroke="#808080" stroke-width="1"/>
<path d="M78 701.5 H144" stroke="#c0c0c0" stroke-width="1"/>
<path d="M269 705.5 H346" stroke="#c0c0c0" stroke-width="1"/>
<path d="M78 707.5 H123" stroke="#c0c0c0" stroke-width="1"/>
<path d="M297 711.5 H346" stroke="#808080" stroke-width="1"/>
<path d="M78 713.5 H102" stroke="#c0c0c0" stroke-width="1"/>
<path d="M332 717.5 H346" stroke="#c0c0c0" stroke-width="1"/>
<path d="M78 720.5 H88" stroke="#c0c0c0" stroke-width="1"/>
<path d="M136 719.5 H220" stroke="#c0c0c0" stroke-width="1"/>
<path d="M227 719.5 H312" stroke="#c0c0c0" stroke-width="1"/>
<path d="M157 725.5 H221" stroke="#808080" stroke-width="2"/>
<path d="M227 725.5 H292" stroke="#808080" stroke-width="2"/>
<path d="M185 732.5 H220" stroke="#808080" stroke-width="1"/>
<path d="M227 732.5 H263" stroke="#c0c0c0" stroke-width="1"/>
<path d="M206 736.5 H220" stroke="#c0c0c0" stroke-width="1"/>
<path d="M227 736.5 H242" stroke="#c0c0c0" stroke-width="1"/>
<path d="M220 737 V748" stroke="#808080" stroke-width="2"/>
<path d="M346 716 V748" stroke="#808080" stroke-width="2"/>
<path d="M350.5 627 V716" stroke="#d8d8d8" stroke-width="1"/>
<path d="M353 628.5 H781" stroke="#c0c0c0" stroke-width="1"/>
<path d="M353 634.5 H766" stroke="#c0c0c0" stroke-width="1"/>
<path d="M353 641.5 H745" stroke="#c0c0c0" stroke-width="1"/>
<path d="M353 647.5 H739" stroke="#c0c0c0" stroke-width="1"/>
<path d="M353 654.5 H718" stroke="#c0c0c0" stroke-width="1"/>
<path d="M353 660.5 H661" stroke="#c0c0c0" stroke-width="1"/>
<path d="M353 666.5 H627" stroke="#c0c0c0" stroke-width="1"/>
<path d="M353 672.5 H585" stroke="#c0c0c0" stroke-width="1"/>
<path d="M353 677.5 H564" stroke="#c0c0c0" stroke-width="1"/>
<path d="M353 683.5 H543" stroke="#c0c0c0" stroke-width="1"/>
<path d="M353 687.5 H515" stroke="#808080" stroke-width="1"/>
<path d="M353 694.5 H494" stroke="#c0c0c0" stroke-width="1"/>
<path d="M353 699.5 H480" stroke="#808080" stroke-width="1"/>
<path d="M353 706.5 H430" stroke="#c0c0c0" stroke-width="1"/>
<path d="M353 711.5 H402" stroke="#808080" stroke-width="1"/>
<path d="M353 717.5 H367" stroke="#c0c0c0" stroke-width="1"/>
<path d="M605 577.5 H669" stroke="#b0b0b0" stroke-width="1"/>
<path d="M675 577.5 H739" stroke="#b0b0b0" stroke-width="1"/>
<path d="M647 582.5 H669" stroke="#b0b0b0" stroke-width="1"/>
<path d="M675 582.5 H697" stroke="#b0b0b0" stroke-width="1"/>
<path d="M668 582 V618" stroke="#606060" stroke-width="2"/>
<polyline points="81.0,506.0 104.0,504.0 130.0,500.6 154.0,500.0 168.0,504.0 186.0,510.0 206.0,518.0 226.0,526.0 250.0,531.0 278.0,533.0 294.0,534.0 308.0,538.0 316.0,542.0 332.0,550.0 348.0,558.0 360.0,562.0 380.0,563.0 400.0,560.0 420.0,557.0 440.0,548.0 460.0,538.0 477.0,532.0 500.0,522.0 528.0,509.4 562.0,493.8 596.6,469.6 619.0,452.5 648.0,435.4 676.0,425.4 705.0,412.6 733.0,401.0 759.0,384.0" fill="none" stroke="#008080" stroke-width="1" stroke-linejoin="round" />
<polyline points="81.0,521.0 118.0,516.0 158.0,511.0 198.0,508.0 238.0,506.0 278.0,504.6 334.0,502.6 360.0,503.0 400.0,499.0 440.0,494.0 480.0,489.0 520.0,484.0 556.0,480.0 591.0,471.0 676.0,452.5 759.0,435.4" fill="none" stroke="#0ff" stroke-width="1" stroke-linejoin="round" />
<polyline points="81.0,526.0 118.0,518.0 158.0,511.0 198.0,505.0 238.0,498.0 278.0,492.0 308.0,488.0 340.0,483.0 380.0,477.0 420.0,471.0 460.0,466.0 500.0,459.0 545.0,451.0 619.0,429.7 676.0,408.3 719.0,395.5 759.0,384.0" fill="none" stroke="#00f" stroke-width="1" stroke-linejoin="round" />
<polyline points="80.0,286.5 121.0,286.5 130.0,282.5 153.0,276.7 157.0,277.3 178.0,283.7 190.0,290.0 202.0,302.0 222.0,322.0 238.0,336.0 248.0,342.0 262.0,348.0 275.0,359.0 288.0,360.0 302.0,362.0 316.0,370.0 320.0,371.0 330.0,373.0 340.0,380.0 350.0,386.0 364.0,388.0 386.0,385.0 406.0,384.0 426.0,379.0 436.0,372.0 448.0,358.0 460.0,344.0 472.0,324.0 484.0,304.0 496.0,286.0 508.0,270.0 520.0,257.0 528.0,251.0 540.0,243.0 552.0,231.0 568.0,215.0 584.0,199.0 600.0,183.0 616.0,167.0 632.0,155.0 648.0,145.0 664.0,136.0 680.0,127.0 696.0,115.0 712.0,109.0 732.0,108.0 740.0,104.0 752.0,99.0 758.0,97.0" fill="none" stroke="#999" stroke-width="2" stroke-linejoin="round" />
<polyline points="80.0,442.0 94.0,442.5 121.0,442.5 130.0,439.0 144.0,435.0 158.0,434.0 166.0,437.0 178.0,443.0 190.0,450.0 202.0,458.0 210.0,464.0 222.0,474.0 238.0,488.0 250.0,496.0 266.0,504.0 278.0,509.0 294.0,513.0 306.0,515.0 320.0,522.0 330.0,522.6 337.0,528.0 350.0,536.0 360.0,538.7 368.0,538.0 396.0,534.0 424.0,531.0 440.0,520.0 452.0,508.0 464.0,492.0 476.0,474.0 484.0,460.0 496.0,440.0 510.0,422.0 524.0,412.0 540.0,401.0 562.0,381.0 591.0,355.6 619.0,332.0 662.0,303.6 702.0,278.0 718.0,274.0 730.0,273.0 744.0,267.0 759.0,261.0" fill="none" stroke="#999" stroke-width="2" stroke-linejoin="round" />
<polyline points="81.0,309.0 90.0,311.0 104.0,312.0 118.0,312.0 130.0,309.0 138.0,312.0 156.0,314.0 164.0,306.0 178.0,298.0 186.0,289.0 192.0,287.3 202.0,292.0 218.0,302.0 234.0,310.0 248.0,324.0 262.0,342.0 270.0,360.0 282.0,376.0 294.0,390.0 304.0,396.0 318.0,393.0 328.0,392.0 336.0,384.0 346.0,377.0 368.0,374.0 386.0,367.0 410.0,365.0 416.0,358.0 424.0,353.0 432.0,340.0 438.0,324.0 444.0,306.0 452.0,290.0 460.0,270.0 468.0,254.0 474.0,248.0 480.0,245.6 492.0,248.0 500.0,253.0 507.0,256.0 516.0,251.0 528.0,250.0 540.0,251.0 544.0,250.0 550.0,257.0 560.0,259.0 566.0,253.0 576.0,233.0 586.0,215.0 596.0,199.0 606.0,183.0 616.0,169.0 626.0,155.0 636.0,145.0 646.0,139.0 654.0,137.5 664.0,141.0 674.0,149.0 684.0,154.0 694.0,159.0 706.0,161.0 716.0,160.0 732.0,159.0 740.0,147.0 750.0,137.0 759.0,125.0" fill="none" stroke="#800000" stroke-width="1" stroke-linejoin="round" />
<polyline points="81.0,263.6 108.0,260.0 136.0,257.2 153.0,257.6 162.0,260.0 178.0,264.4 192.0,271.0 208.0,276.0 222.0,283.0 234.0,288.0 248.0,290.0 268.0,292.0 294.0,294.0 308.0,298.0 320.0,304.0 332.0,308.0 346.0,318.0 360.0,325.0 372.0,327.0 388.0,325.0 406.0,321.0 424.0,318.0 436.0,313.0 452.0,304.0 472.0,294.0 492.0,283.0 512.0,273.0 532.0,263.0 540.0,263.0 560.0,251.0 580.0,235.0 600.0,219.0 620.0,205.0 640.0,191.0 660.0,181.0 680.0,173.0 700.0,161.0 720.0,151.0 732.0,146.0 740.0,141.0 752.0,133.0 759.0,125.0" fill="none" stroke="#f00" stroke-width="1" stroke-linejoin="round" />
<polyline points="81.0,305.0 90.0,312.0 101.0,319.0 114.0,315.0 129.0,311.0 138.0,317.0 150.0,322.0 158.0,334.0 164.0,354.0 172.0,368.0 180.0,380.0 184.0,394.0 192.0,407.0 202.0,412.0 210.0,416.0 218.0,428.0 230.0,434.0 236.0,430.0 244.0,420.0 254.0,400.0 262.0,393.0 275.0,392.0 286.0,384.0 293.0,383.0 300.0,394.0 304.0,400.0 310.0,416.0 318.0,434.0 328.0,440.0 336.0,462.0 344.0,484.0 352.0,488.0 362.0,484.0 370.0,470.0 378.0,440.0 388.0,408.0 396.0,398.0 404.0,388.0 412.0,384.0 418.0,368.0 424.0,362.0 430.0,342.0 438.0,328.0 448.0,312.0 460.0,296.0 472.0,284.0 486.0,275.0 500.0,273.0 512.0,262.0 522.0,261.0 532.0,263.0 540.0,259.0 550.0,249.0 560.0,235.0 570.0,215.0 580.0,199.0 590.0,181.0 598.0,171.5 606.0,175.0 616.0,166.0 626.0,155.0 636.0,147.0 646.0,147.5 656.0,155.0 664.0,165.0 672.0,174.0 680.0,171.0 688.0,163.0 696.0,154.0 706.0,148.0 714.0,146.0 724.0,147.0 732.0,143.0 740.0,127.0 750.0,113.0 759.0,104.0" fill="none" stroke="#ff8000" stroke-width="1" stroke-linejoin="round" />
<polyline points="81.0,376.0 98.0,388.0 114.0,389.0 129.0,384.0 144.0,393.0 157.0,402.0 162.0,420.0 172.0,440.0 180.0,448.0 186.0,466.0 196.0,476.0 206.0,480.0 214.0,486.0 222.0,498.0 234.0,501.0 242.0,494.0 250.0,480.0 258.0,466.0 266.0,460.0 270.0,459.0 280.0,456.0 290.0,452.0 298.0,458.0 304.0,470.0 308.0,488.0 318.0,504.0 328.0,514.0 336.0,524.0 342.0,544.0 350.0,554.0 358.0,553.0 366.0,544.0 372.0,524.0 380.0,500.0 390.0,476.0 400.0,458.0 410.0,452.0 418.0,440.0 426.0,427.0 434.0,406.0 444.0,388.0 456.0,370.0 468.0,358.0 480.0,348.0 492.0,345.0 500.0,344.0 512.0,333.0 522.0,333.0 534.0,337.0 546.0,332.0 556.0,316.0 566.0,304.0 570.0,292.0 580.0,273.0 590.0,255.0 598.0,246.0 606.0,251.0 616.0,239.0 626.0,229.0 636.0,223.0 642.0,221.6 652.0,227.0 660.0,239.0 668.0,248.0 676.0,251.0 684.0,241.0 694.0,231.0 704.0,223.0 712.0,221.0 720.0,226.0 728.0,225.0 736.0,215.0 744.0,199.0 752.0,187.0 759.0,181.0" fill="none" stroke="#ff8000" stroke-width="1" stroke-linejoin="round" />
<polyline points="81.0,360.0 98.0,361.0 118.0,360.0 130.0,356.0 144.0,353.0 158.0,352.0 174.0,358.0 182.0,362.0 198.0,378.0 210.0,390.0 214.0,400.0 230.0,410.0 244.0,418.0 258.0,424.0 274.0,430.0 294.0,436.0 308.0,440.0 320.0,447.0 340.0,456.0 360.0,460.0 380.0,459.0 400.0,457.0 420.0,454.0 436.0,448.0 452.0,434.0 464.0,416.0 472.0,400.0 486.0,374.0 500.0,354.0 514.0,338.0 528.0,326.0 544.0,314.0 560.0,298.0 570.0,292.0 586.0,275.0 606.0,259.0 626.0,241.0 644.0,227.0 660.0,219.0 676.0,211.0 692.0,201.0 708.0,195.0 720.0,193.0 732.0,189.0 744.0,181.0 759.0,174.0" fill="none" stroke="#0ff" stroke-width="1" stroke-linejoin="round" />
<polyline points="81.0,371.0 98.0,372.0 118.0,372.0 130.0,368.0 144.0,364.0 158.0,362.6 174.0,368.0 186.0,376.0 202.0,392.0 218.0,410.0 230.0,412.0 248.0,426.0 264.0,433.0 278.0,438.0 296.0,444.0 312.0,450.0 320.0,458.0 340.0,467.0 360.0,470.5 380.0,468.0 400.0,465.0 420.0,463.0 436.0,458.0 452.0,445.0 466.0,426.0 478.0,404.0 492.0,380.0 506.0,360.0 520.0,345.0 534.0,334.0 550.0,321.0 566.0,306.0 580.0,292.0 596.0,277.0 616.0,261.0 636.0,245.0 652.0,235.0 668.0,228.0 684.0,220.0 700.0,210.0 714.0,204.0 726.0,202.0 738.0,198.0 750.0,190.0 759.0,185.0" fill="none" stroke="#0ff" stroke-width="1" stroke-linejoin="round" />
<polyline points="81.0,367.2 108.0,367.2 118.0,367.6 130.0,363.6 144.0,358.6 158.0,358.6 174.0,362.6 190.0,374.6 206.0,389.6 218.0,400.6 234.0,416.6 250.0,424.6 266.0,430.6 282.0,436.6 298.0,441.6 314.0,447.6 320.0,452.6 340.0,461.6 360.0,465.6 380.0,463.6 400.0,461.6 420.0,459.6 436.0,453.6 452.0,440.6 464.0,422.6 476.0,400.6 490.0,374.6 504.0,354.6 518.0,340.6 532.0,329.6 548.0,316.6 564.0,301.6 574.0,292.6 590.0,277.6 610.0,261.6 630.0,243.6 648.0,231.6 664.0,223.6 680.0,215.6 696.0,205.6 712.0,199.6 724.0,197.6 736.0,193.6 748.0,185.6 759.0,180.6" fill="none" stroke="#ff0" stroke-width="1" stroke-linejoin="round" />
<polyline points="81.0,366.2 108.0,366.2 118.0,366.6 130.0,362.6 144.0,357.6 158.0,357.6 174.0,361.6 190.0,373.6 206.0,388.6 218.0,399.6 234.0,415.6 250.0,423.6 266.0,429.6 282.0,435.6 298.0,440.6 314.0,446.6 320.0,451.6 340.0,460.6 360.0,464.6 380.0,462.6 400.0,460.6 420.0,458.6 436.0,452.6 452.0,439.6 464.0,421.6 476.0,399.6 490.0,373.6 504.0,353.6 518.0,339.6 532.0,328.6 548.0,315.6 564.0,300.6 574.0,291.6 590.0,276.6 610.0,260.6 630.0,242.6 648.0,230.6 664.0,222.6 680.0,214.6 696.0,204.6 712.0,198.6 724.0,196.6 736.0,192.6 748.0,184.6 759.0,179.6" fill="none" stroke="#00605a" stroke-width="1" stroke-linejoin="round" />
<polyline points="81.0,334.0 94.0,345.0 108.0,347.0 122.0,348.0 130.0,344.0 140.0,348.0 152.0,355.0 160.0,370.0 166.0,400.0 172.0,410.0 180.0,416.0 186.0,428.0 194.0,436.0 206.0,440.0 216.0,450.0 222.0,458.0 234.0,462.0 240.0,457.0 248.0,440.0 258.0,430.0 266.0,422.0 278.0,418.0 286.0,412.0 292.0,410.0 298.0,416.0 300.0,424.0 308.0,450.0 318.0,462.0 328.0,470.0 334.0,490.0 342.0,508.0 350.0,515.0 358.0,513.0 366.0,504.0 372.0,484.0 380.0,450.0 388.0,430.0 396.0,420.0 404.0,414.0 412.0,410.0 420.0,404.0 428.0,378.0 436.0,362.0 448.0,344.0 460.0,328.0 472.0,314.0 484.0,306.0 496.0,307.0 506.0,304.0 514.0,292.0 522.0,291.0 532.0,294.0 540.0,292.0 550.0,284.0 560.0,270.0 568.0,251.0 576.0,233.0 586.0,217.0 598.0,203.0 606.0,211.0 616.0,201.0 626.0,191.0 636.0,181.0 646.0,177.0 654.0,185.0 664.0,201.0 674.0,208.0 682.0,203.0 690.0,195.0 700.0,183.0 710.0,176.0 718.0,177.0 726.0,183.0 734.0,175.0 742.0,159.0 750.0,145.0 759.0,136.0" fill="none" stroke="#f0f" stroke-width="1" stroke-linejoin="round" />
<polyline points="81.0,346.0 88.0,354.0 100.0,360.0 108.0,357.0 122.0,360.0 130.0,354.0 138.0,362.0 148.0,364.0 156.0,372.0 158.0,400.0 166.0,420.0 174.0,430.0 182.0,444.0 190.0,452.0 202.0,458.0 210.0,464.0 218.0,468.0 226.0,471.0 234.0,474.0 240.0,468.0 248.0,452.0 256.0,440.0 264.0,432.0 274.0,430.0 282.0,426.0 290.0,420.0 298.0,428.0 300.0,437.0 306.0,458.0 314.0,468.0 322.0,480.0 330.0,496.0 338.0,516.0 346.0,526.0 354.0,525.0 362.0,518.0 369.0,506.0 376.0,476.0 384.0,448.0 392.0,432.0 400.0,427.0 408.0,422.0 418.0,418.0 424.0,408.0 430.0,390.0 440.0,370.0 452.0,350.0 464.0,334.0 476.0,322.0 488.0,317.0 500.0,315.0 510.0,308.0 520.0,304.0 530.0,306.0 538.0,305.0 548.0,296.0 558.0,286.0 566.0,270.0 570.0,261.0 578.0,245.0 588.0,229.0 598.0,215.0 606.0,219.0 616.0,211.0 626.0,201.0 636.0,193.0 646.0,191.0 654.0,199.0 662.0,211.0 672.0,219.0 680.0,217.0 690.0,207.0 700.0,197.0 710.0,191.0 718.0,191.0 726.0,195.0 734.0,189.0 742.0,175.0 750.0,159.0 759.0,148.0" fill="none" stroke="#f0f" stroke-width="1" stroke-linejoin="round" />
<polyline points="81.0,340.0 94.0,351.0 108.0,352.0 122.0,354.0 130.0,349.0 140.0,355.2 152.0,361.5 160.0,387.5 166.0,410.0 172.0,418.8 180.0,428.2 186.0,438.0 194.0,445.0 206.0,450.5 216.0,458.5 222.0,463.8 234.0,468.0 240.0,462.5 248.0,446.0 258.0,434.0 266.0,426.8 278.0,423.0 286.0,417.5 292.0,416.0 298.0,422.0 300.0,430.5 308.0,455.2 318.0,468.0 328.0,481.0 334.0,498.0 342.0,514.5 350.0,520.2 358.0,517.2 366.0,507.6 372.0,488.6 380.0,456.0 388.0,435.0 396.0,424.8 404.0,419.2 412.0,415.2 420.0,409.3 428.0,387.0 436.0,370.0 448.0,350.3 460.0,333.7 472.0,320.0 484.0,312.3 496.0,311.3 506.0,307.4 514.0,299.2 522.0,297.7 532.0,299.9 540.0,297.6 550.0,289.0 560.0,276.0 568.0,258.2 576.0,241.0 586.0,224.6 598.0,209.0 606.0,215.0 616.0,206.0 626.0,196.0 636.0,187.0 646.0,184.0 654.0,192.0 664.0,206.8 674.0,213.2 682.0,209.0 690.0,201.0 700.0,190.0 710.0,183.5 718.0,184.0 726.0,189.0 734.0,182.0 742.0,167.0 750.0,152.0 759.0,142.0" fill="none" stroke="#0f0" stroke-width="1" stroke-linejoin="round" />
<polyline points="81.0,422.0 124.0,422.0 130.0,419.0 138.0,410.0 146.0,403.0 156.0,401.0 160.0,406.0 166.0,419.0 174.0,427.0 180.0,434.0 186.0,452.0 194.0,464.0 202.0,474.0 210.0,484.0 218.0,495.0 226.0,505.0 236.0,515.0 244.0,516.0 254.0,514.0 262.0,510.0 270.0,503.0 280.0,498.0 290.0,489.0 298.0,487.0 304.0,489.0 310.0,494.0 318.0,503.0 326.0,508.0 332.0,518.0 340.0,536.0 348.0,549.0 356.0,554.0 370.0,556.0 390.0,558.0 408.0,558.0 424.0,563.0 432.0,572.0 444.0,579.0 456.0,576.0 466.0,571.0 474.0,560.0 480.0,540.0 486.0,516.0 492.0,490.0 498.0,468.0 504.0,450.0 510.0,438.0 520.0,424.0 532.0,410.0 542.0,390.0 550.0,366.0 556.0,354.0 563.0,346.0 575.0,351.0 591.0,351.4 598.0,354.0 608.0,350.0 625.0,344.0 639.0,333.0 648.0,318.0 662.0,306.5 670.0,292.0 678.0,275.0 686.0,259.0 696.0,241.0 704.0,233.0 712.0,230.0 728.0,228.0 740.0,231.0 752.0,233.0 759.0,235.0" fill="none" stroke="#000" stroke-width="1" stroke-linejoin="round" />
<polyline points="80.0,376.0 98.0,374.0 118.0,372.6 134.0,370.0 150.0,370.0 162.0,372.0 178.0,378.0 198.0,386.0 218.0,395.0 238.0,400.0 258.0,402.0 278.0,402.7 294.0,404.7 308.0,410.0 320.0,415.0 340.0,425.0 361.0,435.7 384.0,435.7 400.0,433.0 420.0,429.7 440.0,422.0 460.0,411.0 480.0,400.0 500.0,390.0 520.0,381.0 540.0,373.0 560.0,362.0 576.0,352.0 602.0,335.0 648.0,303.6 676.0,292.0 688.0,283.0 704.0,276.0 720.0,269.0 732.0,264.0 744.0,255.0 759.0,247.0" fill="none" stroke="#000" stroke-width="2.4" stroke-linejoin="round" />
<path d="M80.5 328 V339" stroke="#000" stroke-width="1"/>
<rect x="78.0" y="330" width="5" height="9" fill="#000"/>
<path d="M87.5 341 V368" stroke="#000" stroke-width="1"/>
<rect x="85.0" y="341" width="5" height="15" fill="#000"/>
<path d="M94.5 360 V373" stroke="#000" stroke-width="1"/>
<rect x="92.5" y="363.5" width="4" height="9" fill="#fff" stroke="#000" stroke-width="1"/>
<path d="M101.5 351 V364" stroke="#000" stroke-width="1"/>
<rect x="99.5" y="360.5" width="4" height="2" fill="#fff" stroke="#000" stroke-width="1"/>
<path d="M108.5 341 V354" stroke="#000" stroke-width="1"/>
<rect x="106.5" y="343.5" width="4" height="3" fill="#fff" stroke="#000" stroke-width="1"/>
<path d="M115.5 343 V360" stroke="#000" stroke-width="1"/>
<rect x="113.0" y="351" width="5" height="7" fill="#000"/>
<path d="M122.5 347 V362" stroke="#000" stroke-width="1"/>
<rect x="120.5" y="354.5" width="4" height="3" fill="#fff" stroke="#000" stroke-width="1"/>
<path d="M129.5 329 V348" stroke="#000" stroke-width="1"/>
<rect x="127.5" y="333.5" width="4" height="9" fill="#fff" stroke="#000" stroke-width="1"/>
<path d="M136.5 337 V366" stroke="#000" stroke-width="1"/>
<rect x="134.0" y="337" width="5" height="28" fill="#000"/>
<path d="M143.5 355 V368" stroke="#000" stroke-width="1"/>
<rect x="141.5" y="362.5" width="4" height="5" fill="#fff" stroke="#000" stroke-width="1"/>
<path d="M150.5 363 V383" stroke="#000" stroke-width="1"/>
<path d="M148.0 367.5 H153.0" stroke="#000" stroke-width="1"/>
<path d="M157.5 358 V392" stroke="#000" stroke-width="1"/>
<rect x="155.0" y="362" width="5" height="30" fill="#000"/>
<path d="M164.5 406 V433" stroke="#f00" stroke-width="1"/>
<rect x="162.0" y="407" width="5" height="26" fill="#f00"/>
<path d="M171.5 416 V438" stroke="#f00" stroke-width="1"/>
<rect x="169.0" y="425" width="5" height="13" fill="#f00"/>
<path d="M178.5 428 V447" stroke="#f00" stroke-width="1"/>
<rect x="176.5" y="428.5" width="4" height="14" fill="#fff" stroke="#f00" stroke-width="1"/>
<path d="M185.5 442 V467" stroke="#f00" stroke-width="1"/>
<rect x="183.0" y="442" width="5" height="23" fill="#f00"/>
<path d="M192.5 453 V482" stroke="#f00" stroke-width="1"/>
<rect x="190.0" y="459" width="5" height="5" fill="#f00"/>
<path d="M199.5 439 V468" stroke="#f00" stroke-width="1"/>
<rect x="197.5" y="449.5" width="4" height="16" fill="#fff" stroke="#f00" stroke-width="1"/>
<path d="M206.5 430 V462" stroke="#f00" stroke-width="1"/>
<rect x="204.0" y="433" width="5" height="24" fill="#f00"/>
<path d="M213.5 448 V470" stroke="#f00" stroke-width="1"/>
<rect x="211.5" y="455.5" width="4" height="2" fill="#fff" stroke="#f00" stroke-width="1"/>
<path d="M220.5 459 V495" stroke="#f00" stroke-width="1"/>
<rect x="218.0" y="466" width="5" height="24" fill="#f00"/>
<path d="M227.5 468 V493" stroke="#f00" stroke-width="1"/>
<rect x="225.5" y="470.5" width="4" height="15" fill="#fff" stroke="#f00" stroke-width="1"/>
<path d="M234.5 467 V490" stroke="#f00" stroke-width="1"/>
<path d="M232.0 473.5 H237.0" stroke="#f00" stroke-width="1"/>
<path d="M241.5 435 V493" stroke="#f00" stroke-width="1"/>
<rect x="239.5" y="444.5" width="4" height="41" fill="#fff" stroke="#f00" stroke-width="1"/>
<path d="M248.5 425 V457" stroke="#f00" stroke-width="1"/>
<rect x="246.5" y="429.5" width="4" height="25" fill="#fff" stroke="#f00" stroke-width="1"/>
<path d="M255.5 402 V427" stroke="#000" stroke-width="1"/>
<rect x="253.5" y="417.5" width="4" height="8" fill="#fff" stroke="#000" stroke-width="1"/>
<path d="M262.5 402 V421" stroke="#000" stroke-width="1"/>
<rect x="260.5" y="405.5" width="4" height="5" fill="#fff" stroke="#000" stroke-width="1"/>
<path d="M269.5 400 V433" stroke="#000" stroke-width="1"/>
<rect x="267.0" y="403" width="5" height="18" fill="#000"/>
<path d="M276.5 406 V441" stroke="#f00" stroke-width="1"/>
<rect x="274.0" y="415" width="5" height="18" fill="#f00"/>
<path d="M283.5 402 V426" stroke="#000" stroke-width="1"/>
<rect x="281.5" y="408.5" width="4" height="16" fill="#fff" stroke="#000" stroke-width="1"/>
<path d="M290.5 396 V427" stroke="#000" stroke-width="1"/>
<rect x="288.5" y="408.5" width="4" height="14" fill="#fff" stroke="#000" stroke-width="1"/>
<path d="M297.5 413 V446" stroke="#f00" stroke-width="1"/>
<rect x="295.0" y="416" width="5" height="25" fill="#f00"/>
<path d="M304.5 426 V465" stroke="#f00" stroke-width="1"/>
<rect x="302.0" y="437" width="5" height="24" fill="#f00"/>
<path d="M311.5 464 V493" stroke="#f00" stroke-width="1"/>
<rect x="309.0" y="464" width="5" height="28" fill="#f00"/>
<path d="M318.5 475 V510" stroke="#f00" stroke-width="1"/>
<rect x="316.5" y="496.5" width="4" height="2" fill="#fff" stroke="#f00" stroke-width="1"/>
<path d="M325.5 473 V494" stroke="#f00" stroke-width="1"/>
<rect x="323.5" y="478.5" width="4" height="5" fill="#fff" stroke="#f00" stroke-width="1"/>
<path d="M332.5 487 V514" stroke="#f00" stroke-width="1"/>
<rect x="330.0" y="487" width="5" height="27" fill="#f00"/>
<path d="M339.5 515 V545" stroke="#f00" stroke-width="1"/>
<rect x="337.0" y="519" width="5" height="22" fill="#f00"/>
<path d="M346.5 529 V559" stroke="#f00" stroke-width="1"/>
<rect x="344.0" y="532" width="5" height="21" fill="#f00"/>
<path d="M353.5 518 V542" stroke="#f00" stroke-width="1"/>
<rect x="351.5" y="524.5" width="4" height="15" fill="#fff" stroke="#f00" stroke-width="1"/>
<path d="M360.5 508 V531" stroke="#f00" stroke-width="1"/>
<rect x="358.5" y="509.5" width="4" height="12" fill="#fff" stroke="#f00" stroke-width="1"/>
<path d="M367.5 480 V506" stroke="#f00" stroke-width="1"/>
<rect x="365.5" y="484.5" width="4" height="20" fill="#fff" stroke="#f00" stroke-width="1"/>
<path d="M374.5 438 V468" stroke="#000" stroke-width="1"/>
<rect x="372.5" y="440.5" width="4" height="26" fill="#fff" stroke="#000" stroke-width="1"/>
<path d="M381.5 407 V430" stroke="#00f" stroke-width="1"/>
<rect x="379.5" y="417.5" width="4" height="12" fill="#fff" stroke="#00f" stroke-width="1"/>
<path d="M388.5 408 V422" stroke="#00f" stroke-width="1"/>
<path d="M386.0 412.5 H391.0" stroke="#00f" stroke-width="1"/>
<path d="M395.5 400 V416" stroke="#00f" stroke-width="1"/>
<rect x="393.5" y="404.5" width="4" height="6" fill="#fff" stroke="#00f" stroke-width="1"/>
<path d="M402.5 397 V415" stroke="#00f" stroke-width="1"/>
<path d="M400.0 402.5 H405.0" stroke="#00f" stroke-width="1"/>
<path d="M409.5 396 V424" stroke="#00f" stroke-width="1"/>
<rect x="407.0" y="397" width="5" height="26" fill="#00f"/>
<path d="M416.5 382 V418" stroke="#00f" stroke-width="1"/>
<rect x="414.5" y="384.5" width="4" height="28" fill="#fff" stroke="#00f" stroke-width="1"/>
<path d="M423.5 380 V395" stroke="#00f" stroke-width="1"/>
<rect x="421.5" y="386.5" width="4" height="2" fill="#fff" stroke="#00f" stroke-width="1"/>
<path d="M430.5 331 V360" stroke="#00f" stroke-width="1"/>
<rect x="428.5" y="338.5" width="4" height="20" fill="#fff" stroke="#00f" stroke-width="1"/>
<path d="M437.5 324 V337" stroke="#00f" stroke-width="1"/>
<rect x="435.0" y="333" width="5" height="2" fill="#00f"/>
<path d="M444.5 329 V342" stroke="#00f" stroke-width="1"/>
<rect x="442.5" y="332.5" width="4" height="4" fill="#fff" stroke="#00f" stroke-width="1"/>
<path d="M451.5 324 V335" stroke="#00f" stroke-width="1"/>
<rect x="449.5" y="328.5" width="4" height="2" fill="#fff" stroke="#00f" stroke-width="1"/>
<path d="M458.5 304 V330" stroke="#00f" stroke-width="1"/>
<rect x="456.5" y="309.5" width="4" height="20" fill="#fff" stroke="#00f" stroke-width="1"/>
<path d="M465.5 312 V320" stroke="#00f" stroke-width="1"/>
<path d="M463.0 314.5 H468.0" stroke="#00f" stroke-width="1"/>
<path d="M472.5 297 V309" stroke="#00f" stroke-width="1"/>
<rect x="470.5" y="304.5" width="4" height="2" fill="#fff" stroke="#00f" stroke-width="1"/>
<path d="M479.5 301 V306" stroke="#00f" stroke-width="1"/>
<rect x="477.5" y="302.5" width="4" height="2" fill="#fff" stroke="#00f" stroke-width="1"/>
<path d="M486.5 302 V309" stroke="#00f" stroke-width="1"/>
<rect x="484.0" y="305" width="5" height="2" fill="#00f"/>
<path d="M493.5 297 V312" stroke="#00f" stroke-width="1"/>
<rect x="491.5" y="305.5" width="4" height="4" fill="#fff" stroke="#00f" stroke-width="1"/>
<path d="M500.5 286 V308" stroke="#00f" stroke-width="1"/>
<rect x="498.0" y="295" width="5" height="13" fill="#00f"/>
<path d="M507.5 296 V314" stroke="#00f" stroke-width="1"/>
<rect x="505.5" y="298.5" width="4" height="7" fill="#fff" stroke="#00f" stroke-width="1"/>
<path d="M514.5 280 V304" stroke="#00f" stroke-width="1"/>
<rect x="512.5" y="282.5" width="4" height="19" fill="#fff" stroke="#00f" stroke-width="1"/>
<path d="M521.5 294 V308" stroke="#00f" stroke-width="1"/>
<rect x="519.5" y="296.5" width="4" height="2" fill="#fff" stroke="#00f" stroke-width="1"/>
<path d="M528.5 292 V306" stroke="#00f" stroke-width="1"/>
<rect x="526.5" y="298.5" width="4" height="4" fill="#fff" stroke="#00f" stroke-width="1"/>
<path d="M535.5 285 V310" stroke="#00f" stroke-width="1"/>
<rect x="533.0" y="287" width="5" height="22" fill="#00f"/>
<path d="M542.5 284 V298" stroke="#00f" stroke-width="1"/>
<rect x="540.5" y="288.5" width="4" height="9" fill="#fff" stroke="#00f" stroke-width="1"/>
<path d="M549.5 274 V294" stroke="#00f" stroke-width="1"/>
<rect x="547.5" y="277.5" width="4" height="16" fill="#fff" stroke="#00f" stroke-width="1"/>
<path d="M556.5 266 V284" stroke="#00f" stroke-width="1"/>
<rect x="554.5" y="267.5" width="4" height="16" fill="#fff" stroke="#00f" stroke-width="1"/>
<path d="M563.5 254 V274" stroke="#00f" stroke-width="1"/>
<rect x="561.5" y="255.5" width="4" height="14" fill="#fff" stroke="#00f" stroke-width="1"/>
<path d="M570.5 217 V254" stroke="#00f" stroke-width="1"/>
<rect x="568.5" y="219.5" width="4" height="33" fill="#fff" stroke="#00f" stroke-width="1"/>
<path d="M577.5 201 V225" stroke="#00f" stroke-width="1"/>
<path d="M575.0 212.5 H580.0" stroke="#00f" stroke-width="1"/>
<path d="M584.5 208 V219" stroke="#00f" stroke-width="1"/>
<rect x="582.5" y="213.5" width="4" height="2" fill="#fff" stroke="#00f" stroke-width="1"/>
<path d="M591.5 195 V209" stroke="#00f" stroke-width="1"/>
<rect x="589.5" y="201.5" width="4" height="6" fill="#fff" stroke="#00f" stroke-width="1"/>
<path d="M598.5 183 V199" stroke="#00f" stroke-width="1"/>
<rect x="596.5" y="185.5" width="4" height="12" fill="#fff" stroke="#00f" stroke-width="1"/>
<path d="M605.5 179 V225" stroke="#00f" stroke-width="1"/>
<rect x="603.0" y="186" width="5" height="38" fill="#00f"/>
<path d="M612.5 195 V217" stroke="#00f" stroke-width="1"/>
<rect x="610.5" y="196.5" width="4" height="12" fill="#fff" stroke="#00f" stroke-width="1"/>
<path d="M619.5 182 V201" stroke="#00f" stroke-width="1"/>
<path d="M617.0 193.5 H622.0" stroke="#00f" stroke-width="1"/>
<path d="M626.5 175 V190" stroke="#00f" stroke-width="1"/>
<rect x="624.5" y="182.5" width="4" height="6" fill="#fff" stroke="#00f" stroke-width="1"/>
<path d="M633.5 175 V184" stroke="#00f" stroke-width="1"/>
<rect x="631.5" y="177.5" width="4" height="4" fill="#fff" stroke="#00f" stroke-width="1"/>
<path d="M640.5 170 V177" stroke="#00f" stroke-width="1"/>
<rect x="638.0" y="175" width="5" height="2" fill="#00f"/>
<path d="M647.5 173 V193" stroke="#00f" stroke-width="1"/>
<rect x="645.0" y="176" width="5" height="8" fill="#00f"/>
<path d="M654.5 193 V209" stroke="#00f" stroke-width="1"/>
<rect x="652.0" y="197" width="5" height="3" fill="#00f"/>
<path d="M661.5 206 V222" stroke="#00f" stroke-width="1"/>
<rect x="659.0" y="209" width="5" height="12" fill="#00f"/>
<path d="M668.5 208 V230" stroke="#00f" stroke-width="1"/>
<rect x="666.0" y="224" width="5" height="5" fill="#00f"/>
<path d="M675.5 211 V232" stroke="#00f" stroke-width="1"/>
<rect x="673.5" y="225.5" width="4" height="2" fill="#fff" stroke="#00f" stroke-width="1"/>
<path d="M682.5 186 V223" stroke="#00f" stroke-width="1"/>
<rect x="680.5" y="187.5" width="4" height="34" fill="#fff" stroke="#00f" stroke-width="1"/>
<path d="M689.5 186 V206" stroke="#00f" stroke-width="1"/>
<rect x="687.5" y="192.5" width="4" height="6" fill="#fff" stroke="#00f" stroke-width="1"/>
<path d="M696.5 171 V190" stroke="#00f" stroke-width="1"/>
<rect x="694.5" y="176.5" width="4" height="12" fill="#fff" stroke="#00f" stroke-width="1"/>
<path d="M703.5 167 V199" stroke="#00f" stroke-width="1"/>
<rect x="701.0" y="171" width="5" height="6" fill="#00f"/>
<path d="M710.5 165 V183" stroke="#00f" stroke-width="1"/>
<rect x="708.0" y="171" width="5" height="5" fill="#00f"/>
<path d="M717.5 176 V195" stroke="#00f" stroke-width="1"/>
<rect x="715.0" y="182" width="5" height="4" fill="#00f"/>
<path d="M724.5 199 V213" stroke="#00f" stroke-width="1"/>
<path d="M722.0 201.5 H727.0" stroke="#00f" stroke-width="1"/>
<path d="M731.5 174 V199" stroke="#00f" stroke-width="1"/>
<rect x="729.5" y="177.5" width="4" height="11" fill="#fff" stroke="#00f" stroke-width="1"/>
<path d="M738.5 143 V173" stroke="#00f" stroke-width="1"/>
<rect x="736.5" y="144.5" width="4" height="23" fill="#fff" stroke="#00f" stroke-width="1"/>
<path d="M745.5 128 V140" stroke="#00f" stroke-width="1"/>
<rect x="743.0" y="136" width="5" height="3" fill="#00f"/>
<path d="M752.5 130 V140" stroke="#00f" stroke-width="1"/>
<rect x="750.5" y="130.5" width="4" height="4" fill="#fff" stroke="#00f" stroke-width="1"/>
<path d="M759.5 108 V128" stroke="#00f" stroke-width="1"/>
<rect x="757.0" y="116" width="5" height="12" fill="#00f"/>
<path d="M80.5 222.5 V247.5 M74.1 232.5 L80.5 247.5 L86.9 232.5" fill="none" stroke="#008080" stroke-width="1"/>
<path d="M150.6 222.5 V247.5 M144.2 232.5 L150.6 247.5 L157.0 232.5" fill="none" stroke="#f0f" stroke-width="1"/>
<path d="M220.4 222.5 V247.5 M214.0 232.5 L220.4 247.5 L226.8 232.5" fill="none" stroke="#f0f" stroke-width="1"/>
<path d="M227.5 220 V245 M221.1 230 L227.5 245 L233.9 230" fill="none" stroke="#008080" stroke-width="1"/>
<path d="M283.6 222.5 V247.5 M277.20000000000005 232.5 L283.6 247.5 L290.0 232.5" fill="none" stroke="#008080" stroke-width="1"/>
<path d="M346.4 221.5 V246.5 M340.0 231.5 L346.4 246.5 L352.79999999999995 231.5" fill="none" stroke="#f0f" stroke-width="1"/>
<path d="M493 219 V244 M486.6 229 L493 244 L499.4 229" fill="none" stroke="#008080" stroke-width="1"/>
<path d="M521.4 220 V245 M515.0 230 L521.4 245 L527.8 230" fill="none" stroke="#008080" stroke-width="1"/>
<path d="M528.4 219 V244 M522.0 229 L528.4 244 L534.8 229" fill="none" stroke="#f0f" stroke-width="1"/>
<path d="M584.5 124 V149 M578.1 134 L584.5 149 L590.9 134" fill="none" stroke="#f0f" stroke-width="1"/>
<path d="M675.7 103 V128 M669.3000000000001 113 L675.7 128 L682.1 113" fill="none" stroke="#008080" stroke-width="1"/>
<path d="M703.3 99 V124 M696.9 109 L703.3 124 L709.6999999999999 109" fill="none" stroke="#008080" stroke-width="1"/>
<path d="M710.3 101 V126 M703.9 111 L710.3 126 L716.6999999999999 111" fill="none" stroke="#f0f" stroke-width="1"/>
<path d="M731.4 102 V127 M725.0 112 L731.4 127 L737.8 112" fill="none" stroke="#f0f" stroke-width="1"/>
<path d="M822 99.5 V124.5 M815.6 109.5 L822 124.5 L828.4 109.5" fill="none" stroke="#008080" stroke-width="1"/>
<path d="M955 96.5 V121.5 M948.6 106.5 L955 121.5 L961.4 106.5" fill="none" stroke="#f0f" stroke-width="1"/>
<path d="M87 285 V310 M78 290 L87 310 L96 290" fill="none" stroke="#808080" stroke-width="1.7"/>
<path d="M114.7 308 V333 M105.7 313 L114.7 333 L123.7 313" fill="none" stroke="#808080" stroke-width="1.7"/>
<path d="M136 292 V317 M127 297 L136 317 L145 297" fill="none" stroke="#808080" stroke-width="1.7"/>
<path d="M276 336 V361 M267 341 L276 361 L285 341" fill="none" stroke="#808080" stroke-width="1.7"/>
<path d="M297 347 V372 M288 352 L297 372 L306 352" fill="none" stroke="#808080" stroke-width="1.7"/>
<path d="M304.5 377 V402 M295.5 382 L304.5 402 L313.5 382" fill="none" stroke="#808080" stroke-width="1.7"/>
<path d="M535 248 V273 M526 253 L535 273 L544 253" fill="none" stroke="#808080" stroke-width="1.7"/>
<path d="M653.8 155 V180 M644.8 160 L653.8 180 L662.8 160" fill="none" stroke="#808080" stroke-width="1.7"/>
<path d="M724 145 V170 M715 150 L724 170 L733 150" fill="none" stroke="#808080" stroke-width="1.7"/>
<path d="M605 246 V271 M596 251 L605 271 L614 251" fill="none" stroke="#808080" stroke-width="1.7"/>
<path d="M157 293 V318 M147.5 297 L157 318 L166.5 297" fill="none" stroke="#f00" stroke-width="2.2"/>
<path d="M220 403 V428 M210.5 407 L220 428 L229.5 407" fill="none" stroke="#f00" stroke-width="2.2"/>
<path d="M297 363 V388 M287.5 367 L297 388 L306.5 367" fill="none" stroke="#f00" stroke-width="2.2"/>
<path d="M332 435 V460 M322.5 439 L332 460 L341.5 439" fill="none" stroke="#f00" stroke-width="2.2"/>
<path d="M668.3 175 V200 M658.8 179 L668.3 200 L677.8 179" fill="none" stroke="#f00" stroke-width="2.2"/>
<path d="M94.4 319 V344 M87.9 330 L94.4 344 L100.9 330" fill="none" stroke="#f00" stroke-width="1"/>
<path d="M144 311 V336 M137.5 322 L144 336 L150.5 322" fill="none" stroke="#f00" stroke-width="1"/>
<path d="M150.5 322 V347 M144.0 333 L150.5 347 L157.0 333" fill="none" stroke="#f00" stroke-width="1"/>
<path d="M206 388 V413 M199.5 399 L206 413 L212.5 399" fill="none" stroke="#f00" stroke-width="1"/>
<path d="M213 365 V390 M206.5 376 L213 390 L219.5 376" fill="none" stroke="#f00" stroke-width="1"/>
<path d="M227 421 V446 M220.5 432 L227 446 L233.5 432" fill="none" stroke="#f00" stroke-width="1"/>
<path d="M234 405 V430 M227.5 416 L234 430 L240.5 416" fill="none" stroke="#f00" stroke-width="1"/>
<path d="M241 395 V420 M234.5 406 L241 420 L247.5 406" fill="none" stroke="#f00" stroke-width="1"/>
<path d="M276.4 368 V393 M269.9 379 L276.4 393 L282.9 379" fill="none" stroke="#f00" stroke-width="1"/>
<path d="M724 172.5 V186.5 M718 173.5 L724 186.5 L730 173.5" fill="none" stroke="#f00" stroke-width="1"/>
<path d="M108 407 V375 M99 395 L108 375 L117 395" fill="none" stroke="#0f0" stroke-width="2.2"/>
<path d="M129 407 V375 M120 395 L129 375 L138 395" fill="none" stroke="#0f0" stroke-width="2.2"/>
<path d="M241 541 V509 M232 529 L241 509 L250 529" fill="none" stroke="#0f0" stroke-width="2.2"/>
<path d="M283 478 V446 M274 466 L283 446 L292 466" fill="none" stroke="#0f0" stroke-width="2.2"/>
<path d="M360 578 V546 M351 566 L360 546 L369 566" fill="none" stroke="#0f0" stroke-width="2.2"/>
<path d="M542 406 V374 M533 394 L542 374 L551 394" fill="none" stroke="#0f0" stroke-width="2.2"/>
<path d="M612 309 V277 M603 297 L612 277 L621 297" fill="none" stroke="#0f0" stroke-width="2.2"/>
<path d="M682.3 264 V232 M673.3 252 L682.3 232 L691.3 252" fill="none" stroke="#0f0" stroke-width="2.2"/>
<path d="M730.4 250 V218 M721.4 238 L730.4 218 L739.4 238" fill="none" stroke="#0f0" stroke-width="2.2"/>
<path d="M206 504 V472 M199.5 486 L206 472 L212.5 486" fill="none" stroke="#0f0" stroke-width="1"/>
<path d="M101 431 V399 M92 419 L101 399 L110 419" fill="none" stroke="#808080" stroke-width="1.7"/>
<path d="M199 523 V491 M190 511 L199 491 L208 511" fill="none" stroke="#808080" stroke-width="1.7"/>
<path d="M206 546 V514 M197 534 L206 514 L215 534" fill="none" stroke="#808080" stroke-width="1.7"/>
<path d="M226.7 556 V524 M217.7 544 L226.7 524 L235.7 544" fill="none" stroke="#808080" stroke-width="1.7"/>
<path d="M325 554 V522 M316 542 L325 522 L334 542" fill="none" stroke="#808080" stroke-width="1.7"/>
<path d="M353 604 V572 M344 592 L353 572 L362 592" fill="none" stroke="#808080" stroke-width="1.7"/>
<path d="M675.3 284 V252 M666.3 272 L675.3 252 L684.3 272" fill="none" stroke="#808080" stroke-width="1.7"/>
<path d="M304.5 506 V474 M298.0 488 L304.5 474 L311.0 488" fill="none" stroke="#808080" stroke-width="1"/>
</g><g clip-path="url(#cm)">
<text x="836" y="174" font-family="Liberation Sans, sans-serif" font-weight="bold" font-size="13" fill="#000" text-anchor="middle" >4781</text>
<path d="M808 178.5 H865" stroke="#f00" stroke-width="1"/>
<text x="836" y="354" font-family="Liberation Sans, sans-serif" font-weight="bold" font-size="13" fill="#000" text-anchor="middle" >4457</text>
<path d="M808 358.5 H865" stroke="#f00" stroke-width="1"/>
<text x="836" y="450" font-family="Liberation Sans, sans-serif" font-weight="bold" font-size="13" fill="#000" text-anchor="middle" >4289</text>
<path d="M808 454.5 H865" stroke="#f00" stroke-width="1"/>
<text x="836" y="543" font-family="Liberation Sans, sans-serif" font-weight="bold" font-size="13" fill="#000" text-anchor="middle" >4121</text>
<path d="M808 547.5 H865" stroke="#f00" stroke-width="1"/>
<text x="836" y="727" font-family="Liberation Sans, sans-serif" font-weight="bold" font-size="13" fill="#000" text-anchor="middle" >3796</text>
<path d="M808 731.5 H865" stroke="#f00" stroke-width="1"/>
<text x="746" y="233" font-family="Liberation Sans, sans-serif" font-weight="bold" font-size="13" fill="#000" text-anchor="start" >S/T BUY SIGNAL</text>
<text x="676" y="619" font-family="Liberation Sans, sans-serif" font-weight="bold" font-size="13" fill="#000" text-anchor="start" >Small T</text>
<text x="948" y="140.7" font-family="Liberation Sans, sans-serif" font-weight="bold" font-size="13.2" fill="#000" text-anchor="start" >Next Echo and Pulse Highs</text>
<text x="948" y="188.7" font-family="Liberation Sans, sans-serif" font-weight="bold" font-size="13.2" fill="#000" text-anchor="start" >* S/T BUY SIGNAL *</text>
<text x="948" y="204.7" font-family="Liberation Sans, sans-serif" font-weight="bold" font-size="13.2" fill="#000" text-anchor="start" >* NO SHORT ALERT *</text>
<text x="948" y="236.7" font-family="Liberation Sans, sans-serif" font-weight="bold" font-size="13.2" fill="#000" text-anchor="start" >S/T BUY Signal at 4770 on 18 Jan</text>
<text x="948" y="268.7" font-family="Liberation Sans, sans-serif" font-weight="bold" font-size="13.2" fill="#000" text-anchor="start" >T volume Osc: negative on 29 Dec</text>
<text x="948" y="284.7" font-family="Liberation Sans, sans-serif" font-weight="bold" font-size="13.2" fill="#000" text-anchor="start" >Down</text>
<text x="948" y="316.7" font-family="Liberation Sans, sans-serif" font-weight="bold" font-size="13.2" fill="#000" text-anchor="start" >Osc: SELL Signal on 02 Jan</text>
<text x="948" y="332.7" font-family="Liberation Sans, sans-serif" font-weight="bold" font-size="13.2" fill="#000" text-anchor="start" >Up</text>
<text x="948" y="396.7" font-family="Liberation Sans, sans-serif" font-weight="bold" font-size="13.2" fill="#000" text-anchor="start" >Click here for</text>
<text x="948" y="412.7" font-family="Liberation Sans, sans-serif" font-weight="bold" font-size="13.2" fill="#000" text-anchor="start" >More Information...</text>
<text x="948" y="701" font-family="Liberation Sans, sans-serif" font-weight="bold" font-size="13.2" fill="#000" text-anchor="start" >Next Projected Low(s)</text>
</g>
<g shape-rendering="crispEdges">
<path d="M1190 742.5 H1191" stroke="#000" stroke-width="1"/>
<path d="M1190 737.5 H1191" stroke="#000" stroke-width="1"/>
<path d="M1190 731.5 H1196" stroke="#000" stroke-width="1"/>
<path d="M1190 725.5 H1191" stroke="#000" stroke-width="1"/>
<path d="M1190 720.5 H1191" stroke="#000" stroke-width="1"/>
<path d="M1190 714.5 H1191" stroke="#000" stroke-width="1"/>
<path d="M1190 708.5 H1191" stroke="#000" stroke-width="1"/>
<path d="M1190 703.5 H1193" stroke="#000" stroke-width="1"/>
<path d="M1190 697.5 H1191" stroke="#000" stroke-width="1"/>
<path d="M1190 691.5 H1191" stroke="#000" stroke-width="1"/>
<path d="M1190 686.5 H1191" stroke="#000" stroke-width="1"/>
<path d="M1190 680.5 H1191" stroke="#000" stroke-width="1"/>
<path d="M1190 674.5 H1196" stroke="#000" stroke-width="1"/>
<path d="M1190 669.5 H1191" stroke="#000" stroke-width="1"/>
<path d="M1190 663.5 H1191" stroke="#000" stroke-width="1"/>
<path d="M1190 658.5 H1191" stroke="#000" stroke-width="1"/>
<path d="M1190 652.5 H1191" stroke="#000" stroke-width="1"/>
<path d="M1190 646.5 H1193" stroke="#000" stroke-width="1"/>
<path d="M1190 641.5 H1191" stroke="#000" stroke-width="1"/>
<path d="M1190 635.5 H1191" stroke="#000" stroke-width="1"/>
<path d="M1190 629.5 H1191" stroke="#000" stroke-width="1"/>
<path d="M1190 624.5 H1191" stroke="#000" stroke-width="1"/>
<path d="M1190 618.5 H1196" stroke="#000" stroke-width="1"/>
<path d="M1190 612.5 H1191" stroke="#000" stroke-width="1"/>
<path d="M1190 607.5 H1191" stroke="#000" stroke-width="1"/>
<path d="M1190 601.5 H1191" stroke="#000" stroke-width="1"/>
<path d="M1190 595.5 H1191" stroke="#000" stroke-width="1"/>
<path d="M1190 590.5 H1193" stroke="#000" stroke-width="1"/>
<path d="M1190 584.5 H1191" stroke="#000" stroke-width="1"/>
<path d="M1190 578.5 H1191" stroke="#000" stroke-width="1"/>
<path d="M1190 573.5 H1191" stroke="#000" stroke-width="1"/>
<path d="M1190 567.5 H1191" stroke="#000" stroke-width="1"/>
<path d="M1190 562.5 H1196" stroke="#000" stroke-width="1"/>
<path d="M1190 556.5 H1191" stroke="#000" stroke-width="1"/>
<path d="M1190 550.5 H1191" stroke="#000" stroke-width="1"/>
<path d="M1190 545.5 H1191" stroke="#000" stroke-width="1"/>
<path d="M1190 539.5 H1191" stroke="#000" stroke-width="1"/>
<path d="M1190 533.5 H1193" stroke="#000" stroke-width="1"/>
<path d="M1190 528.5 H1191" stroke="#000" stroke-width="1"/>
<path d="M1190 522.5 H1191" stroke="#000" stroke-width="1"/>
<path d="M1190 516.5 H1191" stroke="#000" stroke-width="1"/>
<path d="M1190 511.5 H1191" stroke="#000" stroke-width="1"/>
<path d="M1190 505.5 H1196" stroke="#000" stroke-width="1"/>
<path d="M1190 499.5 H1191" stroke="#000" stroke-width="1"/>
<path d="M1190 494.5 H1191" stroke="#000" stroke-width="1"/>
<path d="M1190 488.5 H1191" stroke="#000" stroke-width="1"/>
<path d="M1190 482.5 H1191" stroke="#000" stroke-width="1"/>
<path d="M1190 477.5 H1193" stroke="#000" stroke-width="1"/>
<path d="M1190 471.5 H1191" stroke="#000" stroke-width="1"/>
<path d="M1190 465.5 H1191" stroke="#000" stroke-width="1"/>
<path d="M1190 460.5 H1191" stroke="#000" stroke-width="1"/>
<path d="M1190 454.5 H1191" stroke="#000" stroke-width="1"/>
<path d="M1190 448.5 H1196" stroke="#000" stroke-width="1"/>
<path d="M1190 443.5 H1191" stroke="#000" stroke-width="1"/>
<path d="M1190 437.5 H1191" stroke="#000" stroke-width="1"/>
<path d="M1190 432.5 H1191" stroke="#000" stroke-width="1"/>
<path d="M1190 426.5 H1191" stroke="#000" stroke-width="1"/>
<path d="M1190 420.5 H1193" stroke="#000" stroke-width="1"/>
<path d="M1190 415.5 H1191" stroke="#000" stroke-width="1"/>
<path d="M1190 409.5 H1191" stroke="#000" stroke-width="1"/>
<path d="M1190 403.5 H1191" stroke="#000" stroke-width="1"/>
<path d="M1190 398.5 H1191" stroke="#000" stroke-width="1"/>
<path d="M1190 392.5 H1196" stroke="#000" stroke-width="1"/>
<path d="M1190 386.5 H1191" stroke="#000" stroke-width="1"/>
<path d="M1190 381.5 H1191" stroke="#000" stroke-width="1"/>
<path d="M1190 375.5 H1191" stroke="#000" stroke-width="1"/>
<path d="M1190 369.5 H1191" stroke="#000" stroke-width="1"/>
<path d="M1190 364.5 H1193" stroke="#000" stroke-width="1"/>
<path d="M1190 358.5 H1191" stroke="#000" stroke-width="1"/>
<path d="M1190 352.5 H1191" stroke="#000" stroke-width="1"/>
<path d="M1190 347.5 H1191" stroke="#000" stroke-width="1"/>
<path d="M1190 341.5 H1191" stroke="#000" stroke-width="1"/>
<path d="M1190 336.5 H1196" stroke="#000" stroke-width="1"/>
<path d="M1190 330.5 H1191" stroke="#000" stroke-width="1"/>
<path d="M1190 324.5 H1191" stroke="#000" stroke-width="1"/>
<path d="M1190 319.5 H1191" stroke="#000" stroke-width="1"/>
<path d="M1190 313.5 H1191" stroke="#000" stroke-width="1"/>
<path d="M1190 307.5 H1193" stroke="#000" stroke-width="1"/>
<path d="M1190 302.5 H1191" stroke="#000" stroke-width="1"/>
<path d="M1190 296.5 H1191" stroke="#000" stroke-width="1"/>
<path d="M1190 290.5 H1191" stroke="#000" stroke-width="1"/>
<path d="M1190 285.5 H1191" stroke="#000" stroke-width="1"/>
<path d="M1190 279.5 H1196" stroke="#000" stroke-width="1"/>
<path d="M1190 273.5 H1191" stroke="#000" stroke-width="1"/>
<path d="M1190 268.5 H1191" stroke="#000" stroke-width="1"/>
<path d="M1190 262.5 H1191" stroke="#000" stroke-width="1"/>
<path d="M1190 256.5 H1191" stroke="#000" stroke-width="1"/>
<path d="M1190 251.5 H1193" stroke="#000" stroke-width="1"/>
<path d="M1190 245.5 H1191" stroke="#000" stroke-width="1"/>
<path d="M1190 239.5 H1191" stroke="#000" stroke-width="1"/>
<path d="M1190 234.5 H1191" stroke="#000" stroke-width="1"/>
<path d="M1190 228.5 H1191" stroke="#000" stroke-width="1"/>
<path d="M1190 222.5 H1196" stroke="#000" stroke-width="1"/>
<path d="M1190 217.5 H1191" stroke="#000" stroke-width="1"/>
<path d="M1190 211.5 H1191" stroke="#000" stroke-width="1"/>
<path d="M1190 206.5 H1191" stroke="#000" stroke-width="1"/>
<path d="M1190 200.5 H1191" stroke="#000" stroke-width="1"/>
<path d="M1190 194.5 H1193" stroke="#000" stroke-width="1"/>
<path d="M1190 189.5 H1191" stroke="#000" stroke-width="1"/>
<path d="M1190 183.5 H1191" stroke="#000" stroke-width="1"/>
<path d="M1190 177.5 H1191" stroke="#000" stroke-width="1"/>
<path d="M1190 172.5 H1191" stroke="#000" stroke-width="1"/>
<path d="M1190 166.5 H1196" stroke="#000" stroke-width="1"/>
<path d="M1190 160.5 H1191" stroke="#000" stroke-width="1"/>
<path d="M1190 155.5 H1191" stroke="#000" stroke-width="1"/>
<path d="M1190 149.5 H1191" stroke="#000" stroke-width="1"/>
<path d="M1190 143.5 H1191" stroke="#000" stroke-width="1"/>
<path d="M1190 138.5 H1193" stroke="#000" stroke-width="1"/>
<path d="M1190 132.5 H1191" stroke="#000" stroke-width="1"/>
<path d="M1190 126.5 H1191" stroke="#000" stroke-width="1"/>
<path d="M1190 121.5 H1191" stroke="#000" stroke-width="1"/>
<path d="M1190 115.5 H1191" stroke="#000" stroke-width="1"/>
<path d="M1190 110.5 H1196" stroke="#000" stroke-width="1"/>
<path d="M1190 104.5 H1191" stroke="#000" stroke-width="1"/>
</g>
<text x="1198" y="735.8" font-family="Liberation Sans, sans-serif" font-weight="bold" font-size="12" fill="#000" text-anchor="start" textLength="44" lengthAdjust="spacingAndGlyphs">3800.00</text>
<text x="1198" y="678.8" font-family="Liberation Sans, sans-serif" font-weight="bold" font-size="12" fill="#000" text-anchor="start" textLength="44" lengthAdjust="spacingAndGlyphs">3900.00</text>
<text x="1198" y="622.8" font-family="Liberation Sans, sans-serif" font-weight="bold" font-size="12" fill="#000" text-anchor="start" textLength="44" lengthAdjust="spacingAndGlyphs">4000.00</text>
<text x="1198" y="566.8" font-family="Liberation Sans, sans-serif" font-weight="bold" font-size="12" fill="#000" text-anchor="start" textLength="44" lengthAdjust="spacingAndGlyphs">4100.00</text>
<text x="1198" y="509.8" font-family="Liberation Sans, sans-serif" font-weight="bold" font-size="12" fill="#000" text-anchor="start" textLength="44" lengthAdjust="spacingAndGlyphs">4200.00</text>
<text x="1198" y="452.8" font-family="Liberation Sans, sans-serif" font-weight="bold" font-size="12" fill="#000" text-anchor="start" textLength="44" lengthAdjust="spacingAndGlyphs">4300.00</text>
<text x="1198" y="396.8" font-family="Liberation Sans, sans-serif" font-weight="bold" font-size="12" fill="#000" text-anchor="start" textLength="44" lengthAdjust="spacingAndGlyphs">4400.00</text>
<text x="1198" y="340.8" font-family="Liberation Sans, sans-serif" font-weight="bold" font-size="12" fill="#000" text-anchor="start" textLength="44" lengthAdjust="spacingAndGlyphs">4500.00</text>
<text x="1198" y="283.8" font-family="Liberation Sans, sans-serif" font-weight="bold" font-size="12" fill="#000" text-anchor="start" textLength="44" lengthAdjust="spacingAndGlyphs">4600.00</text>
<text x="1198" y="226.8" font-family="Liberation Sans, sans-serif" font-weight="bold" font-size="12" fill="#000" text-anchor="start" textLength="44" lengthAdjust="spacingAndGlyphs">4700.00</text>
<text x="1198" y="170.8" font-family="Liberation Sans, sans-serif" font-weight="bold" font-size="12" fill="#000" text-anchor="start" textLength="44" lengthAdjust="spacingAndGlyphs">4800.00</text>
<text x="1198" y="113.8" font-family="Liberation Sans, sans-serif" font-weight="bold" font-size="12" fill="#000" text-anchor="start" textLength="44" lengthAdjust="spacingAndGlyphs">4900.00</text>
<rect x="1190" y="98" width="57" height="10.5" fill="#ffffe1"/>
<rect x="1190" y="108.5" width="57" height="1" fill="#000"/>
<text x="1218" y="107" font-family="Liberation Sans, sans-serif" font-weight="bold" font-size="12" fill="#000" text-anchor="middle" textLength="45" lengthAdjust="spacingAndGlyphs">4914.58</text>
<rect x="1224.5" y="733" width="23.4" height="14.6" fill="#a8a6a0"/><rect x="1224.5" y="733" width="23.4" height="1.2" fill="#fff"/><rect x="1224.5" y="733" width="1.2" height="14.6" fill="#fff"/>
<path d="M1228 744 L1231 737 L1234 744 Z M1238 744 L1241 737 L1244 744 Z" fill="#ff6" stroke="#000" stroke-width="0.7"/><path d="M1231 737 Q1236 734 1241 737 M1236 735 V745" fill="none" stroke="#ff6" stroke-width="1"/>
<g clip-path="url(#co)" shape-rendering="crispEdges">
<path d="M80.5 844.5 V852.0" stroke="#00f" stroke-width="1"/>
<path d="M87.5 843.5 V852.0" stroke="#00f" stroke-width="1"/>
<path d="M94.5 847.5 V852.0" stroke="#00f" stroke-width="1"/>
<path d="M101.5 851.0 V852.5" stroke="#00f" stroke-width="1"/>
<path d="M108.5 851.0 V855.5" stroke="#00f" stroke-width="1"/>
<path d="M115.5 851.0 V857.5" stroke="#00f" stroke-width="1"/>
<path d="M122.5 851.0 V856.5" stroke="#00f" stroke-width="1"/>
<path d="M129.5 851.0 V852.5" stroke="#00f" stroke-width="1"/>
<path d="M136.5 848.0 V852.0" stroke="#00f" stroke-width="1"/>
<path d="M143.5 849.0 V852.0" stroke="#00f" stroke-width="1"/>
<path d="M150.5 851.0 V852.5" stroke="#00f" stroke-width="1"/>
<path d="M157.5 851.0 V852.5" stroke="#00f" stroke-width="1"/>
<path d="M164.5 851.0 V862.5" stroke="#00f" stroke-width="1"/>
<path d="M171.5 851.0 V871.5" stroke="#00f" stroke-width="1"/>
<path d="M178.5 851.0 V881.5" stroke="#00f" stroke-width="1"/>
<path d="M185.5 851.0 V890.5" stroke="#00f" stroke-width="1"/>
<path d="M192.5 851.0 V902.5" stroke="#00f" stroke-width="1"/>
<path d="M199.5 851.0 V905.5" stroke="#00f" stroke-width="1"/>
<path d="M206.5 851.0 V905.5" stroke="#00f" stroke-width="1"/>
<path d="M213.5 851.0 V907.5" stroke="#00f" stroke-width="1"/>
<path d="M220.5 851.0 V907.5" stroke="#00f" stroke-width="1"/>
<path d="M227.5 851.0 V907.5" stroke="#00f" stroke-width="1"/>
<path d="M234.5 851.0 V908.5" stroke="#00f" stroke-width="1"/>
<path d="M241.5 851.0 V909.5" stroke="#00f" stroke-width="1"/>
<path d="M248.5 851.0 V906.5" stroke="#00f" stroke-width="1"/>
<path d="M255.5 851.0 V896.5" stroke="#00f" stroke-width="1"/>
<path d="M262.5 851.0 V885.5" stroke="#00f" stroke-width="1"/>
<path d="M269.5 851.0 V875.5" stroke="#00f" stroke-width="1"/>
<path d="M276.5 851.0 V868.5" stroke="#00f" stroke-width="1"/>
<path d="M283.5 851.0 V864.5" stroke="#00f" stroke-width="1"/>
<path d="M290.5 851.0 V863.5" stroke="#00f" stroke-width="1"/>
<path d="M297.5 851.0 V863.5" stroke="#00f" stroke-width="1"/>
<path d="M304.5 851.0 V865.5" stroke="#00f" stroke-width="1"/>
<path d="M311.5 851.0 V870.5" stroke="#00f" stroke-width="1"/>
<path d="M318.5 851.0 V878.5" stroke="#00f" stroke-width="1"/>
<path d="M325.5 851.0 V886.5" stroke="#00f" stroke-width="1"/>
<path d="M332.5 851.0 V894.5" stroke="#00f" stroke-width="1"/>
<path d="M339.5 851.0 V903.5" stroke="#00f" stroke-width="1"/>
<path d="M346.5 851.0 V909.5" stroke="#00f" stroke-width="1"/>
<path d="M353.5 851.0 V911.5" stroke="#00f" stroke-width="1"/>
<path d="M360.5 851.0 V913.5" stroke="#00f" stroke-width="1"/>
<path d="M367.5 851.0 V909.5" stroke="#00f" stroke-width="1"/>
<path d="M374.5 851.0 V894.5" stroke="#00f" stroke-width="1"/>
<path d="M381.5 851.0 V874.5" stroke="#00f" stroke-width="1"/>
<path d="M388.5 851.0 V855.5" stroke="#00f" stroke-width="1"/>
<path d="M395.5 837.0 V852.0" stroke="#00f" stroke-width="1"/>
<path d="M402.5 824.0 V852.0" stroke="#00f" stroke-width="1"/>
<path d="M409.5 817.0 V852.0" stroke="#00f" stroke-width="1"/>
<path d="M416.5 815.0 V852.0" stroke="#00f" stroke-width="1"/>
<path d="M423.5 812.0 V852.0" stroke="#00f" stroke-width="1"/>
<path d="M430.5 805.0 V852.0" stroke="#00f" stroke-width="1"/>
<path d="M437.5 796.0 V852.0" stroke="#00f" stroke-width="1"/>
<path d="M444.5 788.0 V852.0" stroke="#00f" stroke-width="1"/>
<path d="M451.5 779.0 V852.0" stroke="#00f" stroke-width="1"/>
<path d="M458.5 772.0 V852.0" stroke="#00f" stroke-width="1"/>
<path d="M465.5 771.0 V852.0" stroke="#00f" stroke-width="1"/>
<path d="M472.5 771.0 V852.0" stroke="#00f" stroke-width="1"/>
<path d="M479.5 770.0 V852.0" stroke="#00f" stroke-width="1"/>
<path d="M486.5 769.0 V852.0" stroke="#00f" stroke-width="1"/>
<path d="M493.5 770.0 V852.0" stroke="#00f" stroke-width="1"/>
<path d="M500.5 770.0 V852.0" stroke="#00f" stroke-width="1"/>
<path d="M507.5 773.0 V852.0" stroke="#00f" stroke-width="1"/>
<path d="M514.5 774.0 V852.0" stroke="#00f" stroke-width="1"/>
<path d="M521.5 776.0 V852.0" stroke="#00f" stroke-width="1"/>
<path d="M528.5 777.0 V852.0" stroke="#00f" stroke-width="1"/>
<path d="M535.5 780.0 V852.0" stroke="#00f" stroke-width="1"/>
<path d="M542.5 781.0 V852.0" stroke="#00f" stroke-width="1"/>
<path d="M549.5 783.0 V852.0" stroke="#00f" stroke-width="1"/>
<path d="M556.5 783.0 V852.0" stroke="#00f" stroke-width="1"/>
<path d="M563.5 783.0 V852.0" stroke="#00f" stroke-width="1"/>
<path d="M570.5 779.0 V852.0" stroke="#00f" stroke-width="1"/>
<path d="M577.5 773.0 V852.0" stroke="#00f" stroke-width="1"/>
<path d="M584.5 769.0 V852.0" stroke="#00f" stroke-width="1"/>
<path d="M591.5 766.0 V852.0" stroke="#00f" stroke-width="1"/>
<path d="M598.5 762.0 V852.0" stroke="#00f" stroke-width="1"/>
<path d="M605.5 764.0 V852.0" stroke="#00f" stroke-width="1"/>
<path d="M612.5 769.0 V852.0" stroke="#00f" stroke-width="1"/>
<path d="M619.5 771.0 V852.0" stroke="#00f" stroke-width="1"/>
<path d="M626.5 773.0 V852.0" stroke="#00f" stroke-width="1"/>
<path d="M633.5 777.0 V852.0" stroke="#00f" stroke-width="1"/>
<path d="M640.5 778.0 V852.0" stroke="#00f" stroke-width="1"/>
<path d="M647.5 779.0 V852.0" stroke="#00f" stroke-width="1"/>
<path d="M654.5 785.0 V852.0" stroke="#00f" stroke-width="1"/>
<path d="M661.5 794.0 V852.0" stroke="#00f" stroke-width="1"/>
<path d="M668.5 803.0 V852.0" stroke="#00f" stroke-width="1"/>
<path d="M675.5 813.0 V852.0" stroke="#00f" stroke-width="1"/>
<path d="M682.5 819.0 V852.0" stroke="#00f" stroke-width="1"/>
<path d="M689.5 822.0 V852.0" stroke="#00f" stroke-width="1"/>
<path d="M696.5 820.0 V852.0" stroke="#00f" stroke-width="1"/>
<path d="M703.5 817.0 V852.0" stroke="#00f" stroke-width="1"/>
<path d="M710.5 813.0 V852.0" stroke="#00f" stroke-width="1"/>
<path d="M717.5 813.0 V852.0" stroke="#00f" stroke-width="1"/>
<path d="M724.5 817.0 V852.0" stroke="#00f" stroke-width="1"/>
<path d="M731.5 820.0 V852.0" stroke="#00f" stroke-width="1"/>
<path d="M738.5 819.0 V852.0" stroke="#00f" stroke-width="1"/>
<path d="M745.5 817.0 V852.0" stroke="#00f" stroke-width="1"/>
<path d="M752.5 813.0 V852.0" stroke="#00f" stroke-width="1"/>
<path d="M759.5 803.0 V852.0" stroke="#00f" stroke-width="1"/>
<polyline points="81.0,812.6 94.0,816.0 124.0,816.0 148.0,822.4 392.0,822.4 395.0,823.6 424.0,822.4 438.0,819.4 458.0,814.0 470.0,809.0 486.0,805.0 506.0,800.6 526.0,797.4 546.0,794.6 566.0,793.4 572.0,793.4 588.0,789.4 610.0,786.4 626.0,784.4 644.0,784.4 650.0,783.4 658.0,783.4 676.0,786.4 696.0,791.4 720.0,796.0 740.0,798.6 750.0,800.4 760.0,800.6" fill="none" stroke="#000" stroke-width="1"/>
<polyline points="81.0,879.4 96.0,879.4 120.0,875.4 150.0,875.4 158.0,873.4 178.0,873.4 200.0,877.0 226.0,883.0 252.0,887.0 264.0,887.4 286.0,884.0 302.0,881.4 318.0,880.4 326.0,881.4 334.0,881.4 346.0,884.4 364.0,888.0 376.0,888.0 386.0,886.4 760.0,886.4" fill="none" stroke="#000" stroke-width="1"/>
</g><g clip-path="url(#co)">
<path d="M115 797.4 V829.4 M105.5 808.4 L115 829.4 L124.5 808.4" fill="none" stroke="#f00" stroke-width="1.6"/>
<path d="M311 802.4 V834.4 M301.5 813.4 L311 834.4 L320.5 813.4" fill="none" stroke="#f00" stroke-width="1.6"/>
<path d="M654 739 V771 M644.5 750 L654 771 L663.5 750" fill="none" stroke="#f00" stroke-width="1.6"/>
<path d="M262 926 V894 M253 915 L262 894 L271 915" fill="none" stroke="#0f0" stroke-width="2"/>
<path d="M381 926 V894 M372 915 L381 894 L390 915" fill="none" stroke="#0f0" stroke-width="2"/>
<text x="78" y="768" textLength="52" lengthAdjust="spacingAndGlyphs" font-family="Liberation Sans, sans-serif" font-weight="bold" font-size="13" fill="#000">Osc 5,35</text>
<text x="395" y="909" font-family="Liberation Sans, sans-serif" font-weight="bold" font-size="13" fill="#000">Osc BUY Signal</text>
</g>
<path d="M1190 919.5 H1191" stroke="#000" stroke-width="1" shape-rendering="crispEdges"/>
<path d="M1190 915.5 H1193" stroke="#000" stroke-width="1" shape-rendering="crispEdges"/>
<path d="M1190 911.5 H1191" stroke="#000" stroke-width="1" shape-rendering="crispEdges"/>
<path d="M1190 906.5 H1191" stroke="#000" stroke-width="1" shape-rendering="crispEdges"/>
<path d="M1190 902.5 H1191" stroke="#000" stroke-width="1" shape-rendering="crispEdges"/>
<path d="M1190 898.5 H1191" stroke="#000" stroke-width="1" shape-rendering="crispEdges"/>
<path d="M1190 894.5 H1196" stroke="#000" stroke-width="1" shape-rendering="crispEdges"/>
<path d="M1190 889.5 H1191" stroke="#000" stroke-width="1" shape-rendering="crispEdges"/>
<path d="M1190 885.5 H1191" stroke="#000" stroke-width="1" shape-rendering="crispEdges"/>
<path d="M1190 881.5 H1191" stroke="#000" stroke-width="1" shape-rendering="crispEdges"/>
<path d="M1190 876.5 H1191" stroke="#000" stroke-width="1" shape-rendering="crispEdges"/>
<path d="M1190 872.5 H1193" stroke="#000" stroke-width="1" shape-rendering="crispEdges"/>
<path d="M1190 868.5 H1191" stroke="#000" stroke-width="1" shape-rendering="crispEdges"/>
<path d="M1190 863.5 H1191" stroke="#000" stroke-width="1" shape-rendering="crispEdges"/>
<path d="M1190 859.5 H1191" stroke="#000" stroke-width="1" shape-rendering="crispEdges"/>
<path d="M1190 855.5 H1191" stroke="#000" stroke-width="1" shape-rendering="crispEdges"/>
<path d="M1190 851.5 H1196" stroke="#000" stroke-width="1" shape-rendering="crispEdges"/>
<path d="M1190 846.5 H1191" stroke="#000" stroke-width="1" shape-rendering="crispEdges"/>
<path d="M1190 842.5 H1191" stroke="#000" stroke-width="1" shape-rendering="crispEdges"/>
<path d="M1190 838.5 H1191" stroke="#000" stroke-width="1" shape-rendering="crispEdges"/>
<path d="M1190 833.5 H1191" stroke="#000" stroke-width="1" shape-rendering="crispEdges"/>
<path d="M1190 829.5 H1193" stroke="#000" stroke-width="1" shape-rendering="crispEdges"/>
<path d="M1190 825.5 H1191" stroke="#000" stroke-width="1" shape-rendering="crispEdges"/>
<path d="M1190 820.5 H1191" stroke="#000" stroke-width="1" shape-rendering="crispEdges"/>
<path d="M1190 816.5 H1191" stroke="#000" stroke-width="1" shape-rendering="crispEdges"/>
<path d="M1190 812.5 H1191" stroke="#000" stroke-width="1" shape-rendering="crispEdges"/>
<path d="M1190 808.5 H1196" stroke="#000" stroke-width="1" shape-rendering="crispEdges"/>
<path d="M1190 803.5 H1191" stroke="#000" stroke-width="1" shape-rendering="crispEdges"/>
<path d="M1190 799.5 H1191" stroke="#000" stroke-width="1" shape-rendering="crispEdges"/>
<path d="M1190 795.5 H1191" stroke="#000" stroke-width="1" shape-rendering="crispEdges"/>
<path d="M1190 790.5 H1191" stroke="#000" stroke-width="1" shape-rendering="crispEdges"/>
<path d="M1190 786.5 H1193" stroke="#000" stroke-width="1" shape-rendering="crispEdges"/>
<path d="M1190 782.5 H1191" stroke="#000" stroke-width="1" shape-rendering="crispEdges"/>
<path d="M1190 777.5 H1191" stroke="#000" stroke-width="1" shape-rendering="crispEdges"/>
<path d="M1190 773.5 H1191" stroke="#000" stroke-width="1" shape-rendering="crispEdges"/>
<path d="M1190 769.5 H1191" stroke="#000" stroke-width="1" shape-rendering="crispEdges"/>
<path d="M1190 765.5 H1196" stroke="#000" stroke-width="1" shape-rendering="crispEdges"/>
<path d="M1190 760.5 H1191" stroke="#000" stroke-width="1" shape-rendering="crispEdges"/>
<text x="1197.5" y="769.7" font-family="Liberation Sans, sans-serif" font-weight="bold" font-size="12.5" fill="#000" text-anchor="start">200</text>
<text x="1197.5" y="855.7" font-family="Liberation Sans, sans-serif" font-weight="bold" font-size="12.5" fill="#000" text-anchor="start">0</text>
<text x="1197.5" y="898.2" font-family="Liberation Sans, sans-serif" font-weight="bold" font-size="12.5" fill="#000" text-anchor="start">-100</text>
<rect x="1188" y="801.8" width="60" height="15.8" fill="#000"/>
<rect x="1188" y="802.6" width="60" height="14.2" fill="#ffffe1"/>
<text x="1218" y="814.5" font-family="Liberation Sans, sans-serif" font-weight="bold" font-size="12.5" fill="#000" text-anchor="middle">96</text>
<rect x="176" y="920" width="1012" height="1" fill="#000"/>
<path d="M206 920.5 L212 937.5" stroke="#000" stroke-width="1" fill="none"/>
<path d="M292.25 920.5 L298.25 937.5" stroke="#000" stroke-width="1" fill="none"/>
<path d="M377.5 920.5 L383.5 937.5" stroke="#000" stroke-width="1" fill="none"/>
<path d="M442.5 920.5 L448.5 937.5" stroke="#000" stroke-width="1" fill="none"/>
<path d="M501.25 920.5 L507.25 937.5" stroke="#000" stroke-width="1" fill="none"/>
<path d="M607.5 937.5 L613.75 920.5" stroke="#000" stroke-width="1" fill="none"/>
<path d="M172 937.5 H607.5" stroke="#000" stroke-width="1" shape-rendering="crispEdges"/>
<path d="M112.5 919 L119.75 937.5 H169.75 L176.5 919 Z" fill="#fff"/>
<path d="M113 920.5 L119.75 937.5 H169.75 L176 920.5" fill="none" stroke="#000" stroke-width="1"/>
<text x="122" y="933" font-family="Liberation Sans, sans-serif" font-size="11" fill="#000" textLength="43.5" lengthAdjust="spacingAndGlyphs">Osc 5,35</text>
<text x="177" y="933" font-family="Liberation Sans, sans-serif" font-size="11" fill="#000" textLength="29.5" lengthAdjust="spacingAndGlyphs">CCI 20</text>
<text x="217" y="933" font-family="Liberation Sans, sans-serif" font-size="11" fill="#000" textLength="74" lengthAdjust="spacingAndGlyphs">MACD 19, 39, 9</text>
<text x="302" y="933" font-family="Liberation Sans, sans-serif" font-size="11" fill="#000" textLength="72.5" lengthAdjust="spacingAndGlyphs">Money Flow 11</text>
<text x="386" y="933" font-family="Liberation Sans, sans-serif" font-size="11" fill="#000" textLength="54.5" lengthAdjust="spacingAndGlyphs">RSI 14, 7, 3</text>
<text x="451" y="933" font-family="Liberation Sans, sans-serif" font-size="11" fill="#000" textLength="49" lengthAdjust="spacingAndGlyphs">RSI 2, 7, 3</text>
<text x="510" y="933" font-family="Liberation Sans, sans-serif" font-size="11" fill="#000" textLength="95" lengthAdjust="spacingAndGlyphs">On Balance Volume</text>
</svg></body></html>
